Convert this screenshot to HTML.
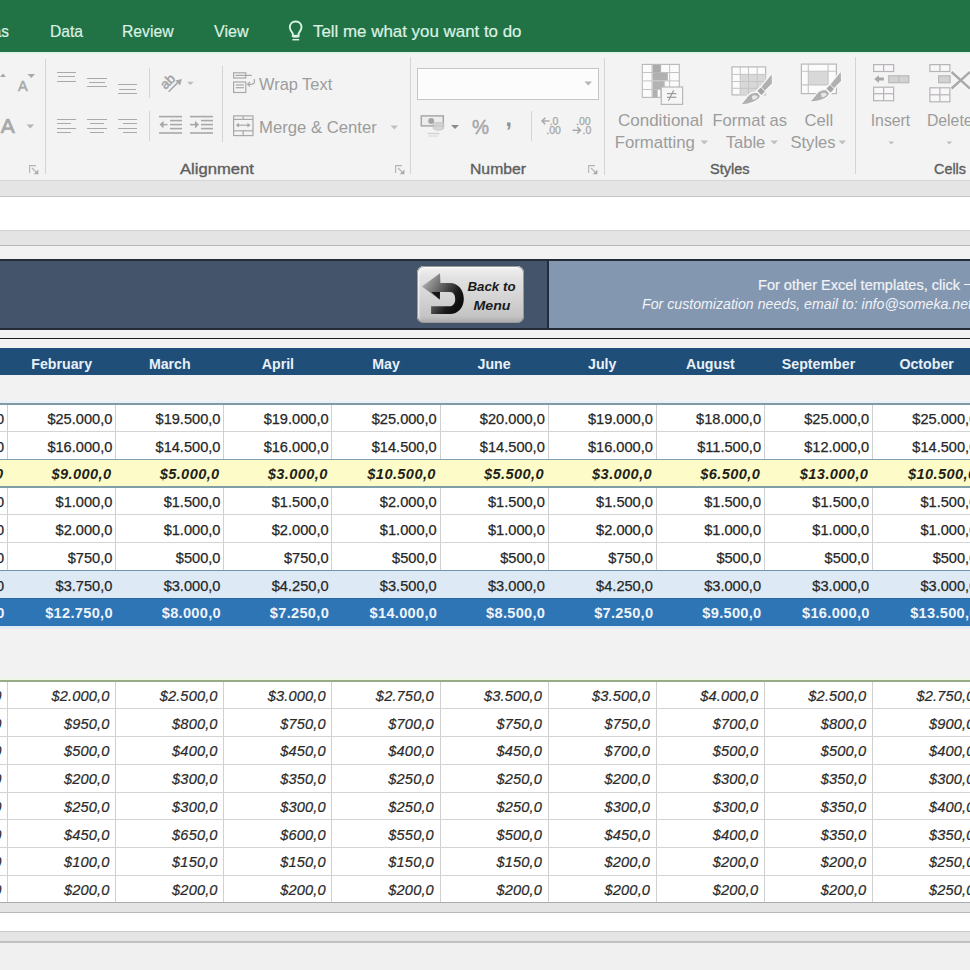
<!DOCTYPE html>
<html><head><meta charset="utf-8"><title>Excel</title>
<style>html,body{margin:0;padding:0;}body{width:970px;height:970px;overflow:hidden;position:relative;background:#f2f2f2;font-family:"Liberation Sans", sans-serif;}</style>
</head><body>
<div style="position:absolute;left:0px;top:0px;width:970px;height:52px;background:#217346;"></div><div style="position:absolute;left:-391.5px;width:400px;text-align:right;top:23.00px;font-size:17px;line-height:17px;color:#dcf1e4;font-weight:normal;font-style:normal;white-space:nowrap;transform:scaleX(0.9032);transform-origin:100% 0;-webkit-text-stroke:0.2px #dcf1e4;">Formulas</div><div style="position:absolute;left:49.5px;top:23.00px;font-size:17px;line-height:17px;color:#dcf1e4;font-weight:normal;font-style:normal;white-space:nowrap;transform:scaleX(0.9187);transform-origin:0 0;-webkit-text-stroke:0.2px #dcf1e4;">Data</div><div style="position:absolute;left:122.3px;top:23.00px;font-size:17px;line-height:17px;color:#dcf1e4;font-weight:normal;font-style:normal;white-space:nowrap;transform:scaleX(0.9238);transform-origin:0 0;-webkit-text-stroke:0.2px #dcf1e4;">Review</div><div style="position:absolute;left:213.9px;top:23.00px;font-size:17px;line-height:17px;color:#dcf1e4;font-weight:normal;font-style:normal;white-space:nowrap;transform:scaleX(0.9440);transform-origin:0 0;-webkit-text-stroke:0.2px #dcf1e4;">View</div><div style="position:absolute;left:312.7px;top:23.00px;font-size:17px;line-height:17px;color:#dcf1e4;font-weight:normal;font-style:normal;white-space:nowrap;transform:scaleX(0.9939);transform-origin:0 0;-webkit-text-stroke:0.2px #dcf1e4;">Tell me what you want to do</div><svg style="position:absolute;left:282px;top:16px" width="30" height="28" viewBox="0 0 30 28">
<path d="M13.7 5.5 C9.6 5.5 7.8 8.5 7.8 11.2 C7.8 13.8 9.6 15.6 10.8 17.5 L10.8 20 L16.6 20 L16.6 17.5 C17.8 15.6 19.5 13.8 19.5 11.2 C19.5 8.5 17.8 5.5 13.7 5.5 Z" fill="none" stroke="#d8f3e2" stroke-width="1.9"/>
<rect x="10.8" y="18.8" width="5.8" height="2.8" fill="#d8f3e2"/>
<line x1="10.4" y1="23.7" x2="17.2" y2="23.7" stroke="#d8f3e2" stroke-width="1.5"/>
</svg><div style="position:absolute;left:0px;top:52px;width:970px;height:128px;background:#f3f3f3;"></div><div style="position:absolute;left:0px;top:52px;width:970px;height:1.6px;background:#e2f3e8;"></div><div style="position:absolute;left:44.5px;top:59px;width:1px;height:115px;background:#d4d4d4;"></div><div style="position:absolute;left:410.1px;top:57px;width:1px;height:117px;background:#d4d4d4;"></div><div style="position:absolute;left:604.3px;top:57.5px;width:1px;height:117.5px;background:#d4d4d4;"></div><div style="position:absolute;left:854.9px;top:57px;width:1px;height:117px;background:#d4d4d4;"></div><div style="position:absolute;left:148.5px;top:68px;width:1px;height:30px;background:#d4d4d4;"></div><div style="position:absolute;left:148.5px;top:111px;width:1px;height:30px;background:#d4d4d4;"></div><div style="position:absolute;left:222px;top:66px;width:1px;height:76px;background:#d4d4d4;"></div><div style="position:absolute;left:180.3px;top:162.02px;font-size:14.6px;line-height:14.6px;color:#5e5e5e;font-weight:normal;font-style:normal;white-space:nowrap;transform:scaleX(1.1370);transform-origin:0 0;-webkit-text-stroke:0.35px #5e5e5e;">Alignment</div><div style="position:absolute;left:469.5px;top:162.02px;font-size:14.6px;line-height:14.6px;color:#5e5e5e;font-weight:normal;font-style:normal;white-space:nowrap;transform:scaleX(1.0789);transform-origin:0 0;-webkit-text-stroke:0.35px #5e5e5e;">Number</div><div style="position:absolute;left:710px;top:162.02px;font-size:14.6px;line-height:14.6px;color:#5e5e5e;font-weight:normal;font-style:normal;white-space:nowrap;transform:scaleX(0.9937);transform-origin:0 0;-webkit-text-stroke:0.35px #5e5e5e;">Styles</div><div style="position:absolute;left:933.8px;top:162.30px;font-size:14.6px;line-height:14.6px;color:#5e5e5e;font-weight:normal;font-style:normal;white-space:nowrap;transform:scaleX(0.9865);transform-origin:0 0;-webkit-text-stroke:0.35px #5e5e5e;">Cells</div><svg style="position:absolute;left:29px;top:165px" width="10" height="10" viewBox="0 0 10 10">
<path d="M0.6 8 V0.6 H7" fill="none" stroke="#b4b4b4" stroke-width="1.1"/>
<path d="M3 3 L7 7" stroke="#b4b4b4" stroke-width="1.1"/><path d="M9.4 4.5 V9.2 H4.7 Z" fill="#aaaaaa"/></svg><svg style="position:absolute;left:395px;top:165px" width="10" height="10" viewBox="0 0 10 10">
<path d="M0.6 8 V0.6 H7" fill="none" stroke="#b4b4b4" stroke-width="1.1"/>
<path d="M3 3 L7 7" stroke="#b4b4b4" stroke-width="1.1"/><path d="M9.4 4.5 V9.2 H4.7 Z" fill="#aaaaaa"/></svg><svg style="position:absolute;left:588px;top:165px" width="10" height="10" viewBox="0 0 10 10">
<path d="M0.6 8 V0.6 H7" fill="none" stroke="#b4b4b4" stroke-width="1.1"/>
<path d="M3 3 L7 7" stroke="#b4b4b4" stroke-width="1.1"/><path d="M9.4 4.5 V9.2 H4.7 Z" fill="#aaaaaa"/></svg><div style="position:absolute;left:18px;top:79.20px;font-size:14.5px;line-height:14.5px;color:#a8a8a8;font-weight:normal;font-style:normal;white-space:nowrap;-webkit-text-stroke:0.5px #a8a8a8;">A</div><svg style="position:absolute;left:0;top:72px" width="40" height="8"><path d="M0 5 L3 1.5 L6 5 Z" fill="#a8a8a8"/><path d="M27.5 2 L35 2 L31.25 6 Z" fill="#a8a8a8"/></svg><div style="position:absolute;left:0.7px;top:114.72px;font-size:21px;line-height:21px;color:#a8a8a8;font-weight:normal;font-style:normal;white-space:nowrap;-webkit-text-stroke:0.7px #a8a8a8;">A</div><svg style="position:absolute;left:26px;top:124px" width="9" height="6"><path d="M0.5 0.5 L8 0.5 L4.25 4.5 Z" fill="#b5b5b5"/></svg><div style="position:absolute;left:56.5px;top:71.65px;width:19.7px;height:1.7px;background:#a9a9a9"></div><div style="position:absolute;left:58.0px;top:75.65px;width:16.5px;height:1.7px;background:#a9a9a9"></div><div style="position:absolute;left:56.5px;top:80.65px;width:19.7px;height:1.7px;background:#a9a9a9"></div><div style="position:absolute;left:87.3px;top:77.65px;width:19.3px;height:1.7px;background:#a9a9a9"></div><div style="position:absolute;left:88.8px;top:81.65px;width:16.3px;height:1.7px;background:#a9a9a9"></div><div style="position:absolute;left:87.3px;top:85.65px;width:19.3px;height:1.7px;background:#a9a9a9"></div><div style="position:absolute;left:117.7px;top:83.65px;width:19.5px;height:1.7px;background:#a9a9a9"></div><div style="position:absolute;left:119.2px;top:88.65px;width:16.5px;height:1.7px;background:#a9a9a9"></div><div style="position:absolute;left:117.7px;top:92.65px;width:19.5px;height:1.7px;background:#a9a9a9"></div><div style="position:absolute;left:56.5px;top:118.65px;width:19.7px;height:1.7px;background:#a9a9a9"></div><div style="position:absolute;left:56.5px;top:122.65px;width:14px;height:1.7px;background:#a9a9a9"></div><div style="position:absolute;left:56.5px;top:127.65px;width:19.7px;height:1.7px;background:#a9a9a9"></div><div style="position:absolute;left:56.5px;top:131.65px;width:14px;height:1.7px;background:#a9a9a9"></div><div style="position:absolute;left:87.3px;top:118.65px;width:19.3px;height:1.7px;background:#a9a9a9"></div><div style="position:absolute;left:90.1px;top:122.65px;width:13.7px;height:1.7px;background:#a9a9a9"></div><div style="position:absolute;left:87.3px;top:127.65px;width:19.3px;height:1.7px;background:#a9a9a9"></div><div style="position:absolute;left:90.1px;top:131.65px;width:13.7px;height:1.7px;background:#a9a9a9"></div><div style="position:absolute;left:117.7px;top:118.65px;width:19.5px;height:1.7px;background:#a9a9a9"></div><div style="position:absolute;left:123.2px;top:122.65px;width:14.0px;height:1.7px;background:#a9a9a9"></div><div style="position:absolute;left:117.7px;top:127.65px;width:19.5px;height:1.7px;background:#a9a9a9"></div><div style="position:absolute;left:123.2px;top:131.65px;width:14.0px;height:1.7px;background:#a9a9a9"></div><svg style="position:absolute;left:150px;top:65px" width="50" height="35" viewBox="0 0 50 35">
<text x="0" y="4.9" text-anchor="middle" transform="translate(17.3,16.2) rotate(-45)" font-family="Liberation Sans" font-size="13.5" fill="#a2a2a2" stroke="#a2a2a2" stroke-width="0.45">ab</text>
<path d="M18.6 26.8 L29.5 15.9" stroke="#a8a8a8" stroke-width="1.5"/><path d="M31.8 14 L25.3 15.6 L30.2 20.5 Z" fill="#a8a8a8"/>
<path d="M37 16.8 L43.8 16.8 L40.4 20 Z" fill="#bdbdbd"/></svg><svg style="position:absolute;left:158px;top:115px" width="56" height="20" viewBox="0 0 56 20">
<g stroke="#a8a8a8" stroke-width="1.6">
<line x1="1" y1="1.6" x2="24" y2="1.6"/><line x1="12" y1="5.6" x2="24" y2="5.6"/><line x1="12" y1="9.6" x2="24" y2="9.6"/><line x1="12" y1="13.6" x2="24" y2="13.6"/><line x1="1" y1="18" x2="24" y2="18"/>
<line x1="3" y1="9.6" x2="9.5" y2="9.6"/>
<line x1="32" y1="1.6" x2="55" y2="1.6"/><line x1="43" y1="5.6" x2="55" y2="5.6"/><line x1="43" y1="9.6" x2="55" y2="9.6"/><line x1="43" y1="13.6" x2="55" y2="13.6"/><line x1="32" y1="18" x2="55" y2="18"/>
<line x1="32" y1="9.6" x2="38" y2="9.6"/>
</g>
<path d="M1.5 9.6 L5.5 5.8 L5.5 13.4 Z" fill="#a8a8a8"/><path d="M41 9.6 L37 5.8 L37 13.4 Z" fill="#a8a8a8"/>
</svg><svg style="position:absolute;left:228px;top:68px" width="30" height="28" viewBox="0 0 30 28">
<g fill="none" stroke="#a8a8a8" stroke-width="1.2">
<rect x="5.6" y="4.8" width="12.2" height="5.2"/><line x1="7.5" y1="7.4" x2="23.8" y2="7.4"/>
<rect x="5.6" y="14" width="12.2" height="10.5"/>
<line x1="7.8" y1="17" x2="16" y2="17"/><line x1="7.8" y1="19.7" x2="16" y2="19.7"/>
<path d="M26.4 11 L26.4 13.5 C26.4 15.5 25 16.3 23 16.3 L20 16.3"/>
<path d="M22 14 L19.6 16.3 L22 18.6"/>
</g></svg><div style="position:absolute;left:259px;top:76.01px;font-size:16.4px;line-height:16.4px;color:#9c9c9c;font-weight:normal;font-style:normal;white-space:nowrap;">Wrap Text</div><svg style="position:absolute;left:228px;top:110px" width="30" height="30" viewBox="0 0 30 30">
<g fill="none" stroke="#a8a8a8" stroke-width="1.2">
<rect x="5.6" y="5.9" width="19.4" height="19.7"/>
<line x1="5.6" y1="9.4" x2="25" y2="9.4"/><line x1="5.6" y1="20.8" x2="25" y2="20.8"/>
<line x1="15.2" y1="5.9" x2="15.2" y2="9.4"/><line x1="15.2" y1="20.8" x2="15.2" y2="25.6"/>
<line x1="9" y1="15.2" x2="21.5" y2="15.2"/>
</g>
<path d="M7.8 15.2 L11 12.8 L11 17.6 Z M22.6 15.2 L19.4 12.8 L19.4 17.6 Z" fill="#a8a8a8"/>
</svg><div style="position:absolute;left:259px;top:120.41px;font-size:16.7px;line-height:16.7px;color:#9c9c9c;font-weight:normal;font-style:normal;white-space:nowrap;">Merge &amp; Center</div><svg style="position:absolute;left:390px;top:125px" width="9" height="6"><path d="M0.5 0.5 L8 0.5 L4.25 4.5 Z" fill="#c0c0c0"/></svg><div style="position:absolute;left:417px;top:68px;width:180px;height:30px;background:#fcfcfc;border:1px solid #c6c6c6;"></div><svg style="position:absolute;left:584px;top:81px" width="9" height="6"><path d="M0.5 0.5 L8 0.5 L4.25 4.5 Z" fill="#b5b5b5"/></svg><svg style="position:absolute;left:415px;top:108px" width="50" height="32" viewBox="0 0 50 32">
<rect x="6.3" y="7.9" width="22" height="10" fill="#ededed" stroke="#a8a8a8" stroke-width="1.5"/>
<circle cx="16.2" cy="13" r="3" fill="#a5a5a5"/>
<ellipse cx="23.5" cy="16.5" rx="5.5" ry="2.2" fill="#d2d2d2" stroke="#c0c0c0" stroke-width="0.8"/>
<ellipse cx="23.5" cy="20" rx="5.5" ry="2.2" fill="#d6d6d6" stroke="#c4c4c4" stroke-width="0.8"/>
<line x1="12.5" y1="25.5" x2="24.5" y2="25.5" stroke="#d2d2d2" stroke-width="1.3"/><line x1="13.5" y1="28" x2="23" y2="28" stroke="#dadada" stroke-width="1.3"/>
<path d="M36 17 L44 17 L40 21 Z" fill="#8a8a8a"/>
</svg><div style="position:absolute;left:471.5px;top:117.81px;font-size:19.5px;line-height:19.5px;color:#a8a8a8;font-weight:normal;font-style:normal;white-space:nowrap;transform:scaleX(0.9802);transform-origin:0 0;-webkit-text-stroke:0.5px #a8a8a8;">%</div><div style="position:absolute;left:505.5px;top:106.51px;font-size:23px;line-height:23px;color:#909090;font-weight:bold;font-style:normal;white-space:nowrap;">,</div><div style="position:absolute;left:531px;top:111px;width:1px;height:29.5px;background:#d4d4d4;"></div><svg style="position:absolute;left:540px;top:116px" width="56" height="20" viewBox="0 0 56 20">
<g font-family="Liberation Sans" font-size="10.5" fill="#a5a5a5" stroke="#a5a5a5" stroke-width="0.25">
<text x="9.5" y="8.5">.0</text><text x="6.3" y="17.8">.00</text>
<text x="36" y="8.5">.00</text><text x="42.5" y="17.8">.0</text></g>
<g stroke="#a5a5a5" stroke-width="1.4" fill="none"><line x1="2" y1="5" x2="9.5" y2="5"/><path d="M5.3 1.8 L2 5 L5.3 8.2"/>
<line x1="32.5" y1="14.3" x2="40.5" y2="14.3"/><path d="M37.2 11.1 L40.5 14.3 L37.2 17.5"/></g>
</svg><svg style="position:absolute;left:635px;top:58px" width="50" height="50" viewBox="0 0 50 50">
<rect x="7.3" y="6.4" width="37" height="33" fill="#fbfbfb" stroke="#b8b8b8" stroke-width="1.1"/>
<g stroke="#c4c4c4" stroke-width="1"><line x1="7.3" y1="14.5" x2="44.3" y2="14.5"/><line x1="7.3" y1="22.9" x2="44.3" y2="22.9"/><line x1="7.3" y1="31.5" x2="44.3" y2="31.5"/>
<line x1="17" y1="6.4" x2="17" y2="39.4"/><line x1="25.7" y1="6.4" x2="25.7" y2="39.4"/><line x1="34.6" y1="6.4" x2="34.6" y2="39.4"/></g>
<rect x="17.6" y="6.9" width="8.1" height="7.6" fill="#ababab"/>
<rect x="17.6" y="14.8" width="15.2" height="7.6" fill="#b0b0b0"/>
<rect x="17.6" y="23.2" width="12.1" height="7.8" fill="#b3b3b3"/>
<rect x="17.6" y="31.8" width="5" height="7.6" fill="#b0b0b0"/>
<rect x="26.3" y="29" width="21.3" height="17.4" fill="#f6f6f6" stroke="#b8b8b8" stroke-width="1.2"/>
<g stroke="#9c9c9c" stroke-width="1.2"><line x1="32" y1="35.6" x2="41.4" y2="35.6"/><line x1="32" y1="39.3" x2="41.4" y2="39.3"/><line x1="38.7" y1="32.2" x2="33.4" y2="42.7"/></g>
</svg><svg style="position:absolute;left:725px;top:58px" width="50" height="50" viewBox="0 0 50 50">
<rect x="7" y="8.9" width="33.6" height="28" fill="#fbfbfb" stroke="#b8b8b8" stroke-width="1.2"/>
<rect x="15.2" y="16.4" width="25.4" height="20.5" fill="#d8d8d8"/>
<g stroke="#c4c4c4" stroke-width="1"><line x1="7" y1="16.4" x2="40.6" y2="16.4"/><line x1="7" y1="23.5" x2="40.6" y2="23.5"/><line x1="7" y1="30.3" x2="40.6" y2="30.3"/>
<line x1="15.2" y1="8.9" x2="15.2" y2="36.9"/><line x1="23.5" y1="8.9" x2="23.5" y2="36.9"/><line x1="32.2" y1="8.9" x2="32.2" y2="36.9"/></g>
<g transform="translate(0.9,2.6)"><g stroke="#f7f7f7" stroke-width="2.6" stroke-linejoin="round" fill="#f7f7f7">
<path d="M45.8 13.9 L46 23 L39 30 L35.5 26.5 Z"/><path d="M35 26.5 L39.5 31 L35.5 35 L31 30.5 Z"/>
<path d="M31.5 32.5 C27 31.5 22.5 34 20.5 38 L15.8 43.6 L22 42.8 C27 41.8 32.5 39.5 34 35.5 Z"/></g>
<path d="M45.8 13.9 L46 23 L39 30 L35.5 26.5 Z" fill="#b0b0b0"/>
<path d="M35 27 L39 31 L35.5 34.5 L31.5 30.5 Z" fill="#a6a6a6"/>
<path d="M31.5 32.5 C27 31.5 22.5 34 20.5 38 L15.8 43.6 L22 42.8 C27 41.8 32.5 39.5 34 35.5 Z" fill="#b0b0b0"/>
<path d="M26 35.5 C28 34 31 34.5 32 36.5 C30.5 38.5 28 39.5 26.5 39 Z" fill="#e8e8e8"/></g>
</svg><svg style="position:absolute;left:795px;top:58px" width="50" height="50" viewBox="0 0 50 50">
<rect x="6.4" y="6.1" width="35" height="29.5" fill="#fbfbfb" stroke="#b8b8b8" stroke-width="1.2"/>
<rect x="13.3" y="13.3" width="19.8" height="13.6" fill="#d8d8d8"/>
<g stroke="#c4c4c4" stroke-width="1.1"><line x1="6.4" y1="13.3" x2="41.4" y2="13.3"/><line x1="6.4" y1="26.9" x2="41.4" y2="26.9"/>
<line x1="13.3" y1="6.1" x2="13.3" y2="35.6"/><line x1="33.1" y1="6.1" x2="33.1" y2="35.6"/></g>
<g stroke="#f7f7f7" stroke-width="2.6" stroke-linejoin="round" fill="#f7f7f7">
<path d="M45.8 13.9 L46 23 L39 30 L35.5 26.5 Z"/><path d="M35 26.5 L39.5 31 L35.5 35 L31 30.5 Z"/>
<path d="M31.5 32.5 C27 31.5 22.5 34 20.5 38 L15.8 43.6 L22 42.8 C27 41.8 32.5 39.5 34 35.5 Z"/></g>
<path d="M45.8 13.9 L46 23 L39 30 L35.5 26.5 Z" fill="#b0b0b0"/>
<path d="M35 27 L39 31 L35.5 34.5 L31.5 30.5 Z" fill="#a6a6a6"/>
<path d="M31.5 32.5 C27 31.5 22.5 34 20.5 38 L15.8 43.6 L22 42.8 C27 41.8 32.5 39.5 34 35.5 Z" fill="#b0b0b0"/>
<path d="M26 35.5 C28 34 31 34.5 32 36.5 C30.5 38.5 28 39.5 26.5 39 Z" fill="#e8e8e8"/>
</svg><div style="position:absolute;left:360.5px;width:600px;text-align:center;top:112.00px;font-size:17.0px;line-height:17.0px;color:#9c9c9c;font-weight:normal;font-style:normal;white-space:nowrap;">Conditional</div><div style="position:absolute;left:354.79999999999995px;width:600px;text-align:center;top:134.51px;font-size:16.8px;line-height:16.8px;color:#9c9c9c;font-weight:normal;font-style:normal;white-space:nowrap;">Formatting</div><div style="position:absolute;left:449.79999999999995px;width:600px;text-align:center;top:113.01px;font-size:16.6px;line-height:16.6px;color:#9c9c9c;font-weight:normal;font-style:normal;white-space:nowrap;">Format as</div><div style="position:absolute;left:445.5px;width:600px;text-align:center;top:134.51px;font-size:16.6px;line-height:16.6px;color:#9c9c9c;font-weight:normal;font-style:normal;white-space:nowrap;">Table</div><div style="position:absolute;left:518.8px;width:600px;text-align:center;top:113.01px;font-size:16.6px;line-height:16.6px;color:#9c9c9c;font-weight:normal;font-style:normal;white-space:nowrap;">Cell</div><div style="position:absolute;left:513px;width:600px;text-align:center;top:134.51px;font-size:16.6px;line-height:16.6px;color:#9c9c9c;font-weight:normal;font-style:normal;white-space:nowrap;">Styles</div><svg style="position:absolute;left:699.5px;top:140px" width="9" height="6"><path d="M0.5 0.5 L8 0.5 L4.25 4.5 Z" fill="#c0c0c0"/></svg><svg style="position:absolute;left:770px;top:140px" width="9" height="6"><path d="M0.5 0.5 L8 0.5 L4.25 4.5 Z" fill="#c0c0c0"/></svg><svg style="position:absolute;left:838px;top:140px" width="9" height="6"><path d="M0.5 0.5 L8 0.5 L4.25 4.5 Z" fill="#c0c0c0"/></svg><svg style="position:absolute;left:865px;top:58px" width="50" height="50" viewBox="0 0 50 50">
<g fill="#f8f6f8" stroke="#b5b5b5" stroke-width="1.2">
<rect x="8.6" y="6.6" width="20" height="6.9"/><line x1="18.6" y1="6.6" x2="18.6" y2="13.5"/>
<rect x="8.6" y="29.2" width="20" height="13.5"/><line x1="18.6" y1="29.2" x2="18.6" y2="42.7"/><line x1="8.6" y1="35.7" x2="28.6" y2="35.7"/>
</g>
<rect x="23.8" y="17.8" width="20" height="6.9" fill="#d2d2d2" stroke="#b8b8b8" stroke-width="1.2"/><line x1="33.8" y1="17.8" x2="33.8" y2="24.7" stroke="#b8b8b8" stroke-width="1.1"/>
<path d="M9.2 21.1 L14 17.3 L14 19.6 L18.9 19.6 L18.9 22.6 L14 22.6 L14 24.9 Z" fill="#a8a8a8"/>
</svg><div style="position:absolute;left:590.5px;width:600px;text-align:center;top:113.20px;font-size:15.8px;line-height:15.8px;color:#9c9c9c;font-weight:normal;font-style:normal;white-space:nowrap;">Insert</div><svg style="position:absolute;left:925px;top:58px" width="45" height="50" viewBox="0 0 45 50">
<g fill="#f8f6f8" stroke="#b5b5b5" stroke-width="1.2">
<rect x="4.9" y="6.6" width="20" height="6.9"/><line x1="14.9" y1="6.6" x2="14.9" y2="13.5"/>
<rect x="4.9" y="29.8" width="20" height="14"/><line x1="14.9" y1="29.8" x2="14.9" y2="43.8"/><line x1="4.9" y1="36.8" x2="24.9" y2="36.8"/>
</g>
<rect x="13.6" y="17.8" width="11.5" height="6.9" fill="#d2d2d2" stroke="#b8b8b8" stroke-width="1.2"/>
<path d="M26.6 14 L45 30.5 M45 14 L26.6 30.5" stroke="#f6f6f6" stroke-width="4.5"/>
<path d="M26.6 14 L45 30.5 M45 14 L26.6 30.5" stroke="#a9a9a9" stroke-width="2.4"/>
</svg><div style="position:absolute;left:926.9px;top:113.20px;font-size:15.8px;line-height:15.8px;color:#9c9c9c;font-weight:normal;font-style:normal;white-space:nowrap;">Delete</div><svg style="position:absolute;left:887.5px;top:140.5px" width="9" height="6"><path d="M0.5 0.5 L6 0.5 L3.25 3.5 Z" fill="#bdbdbd"/></svg><svg style="position:absolute;left:945.5px;top:140.5px" width="9" height="6"><path d="M0.5 0.5 L6 0.5 L3.25 3.5 Z" fill="#bdbdbd"/></svg><div style="position:absolute;left:0px;top:180px;width:970px;height:1px;background:#d6d6d6;"></div><div style="position:absolute;left:0px;top:181px;width:970px;height:15px;background:#e5e5e5;"></div><div style="position:absolute;left:0px;top:195.5px;width:970px;height:1.2px;background:#c6c6c6;"></div><div style="position:absolute;left:0px;top:196.7px;width:970px;height:33.3px;background:#ffffff;"></div><div style="position:absolute;left:0px;top:230px;width:970px;height:1px;background:#d2d2d2;"></div><div style="position:absolute;left:0px;top:231px;width:970px;height:14.5px;background:#e4e4e4;"></div><div style="position:absolute;left:0px;top:245.3px;width:970px;height:1.2px;background:#b5b5b5;"></div><div style="position:absolute;left:0px;top:246.5px;width:970px;height:724px;background:#f2f2f2;"></div><div style="position:absolute;left:0px;top:259px;width:970px;height:71px;background:#252b38;"></div><div style="position:absolute;left:0px;top:261px;width:547px;height:67px;background:#44546a;"></div><div style="position:absolute;left:548.8px;top:261px;width:421.20000000000005px;height:67px;background:#8497b0;"></div><div style="position:absolute;left:416.5px;top:265.5px;width:107.5px;height:57px;border-radius:7px;
background:linear-gradient(180deg,#f4f4f4 0%,#e2e2e2 20%,#d2d2d2 60%,#c4c4c4 88%,#a9a9a9 100%);
box-shadow: inset 0 0 0 1px #9a9a9a, inset 2px 2px 2px rgba(255,255,255,0.8), 0 0 1px #555;"></div><svg style="position:absolute;left:412px;top:262px" width="60" height="64" viewBox="0 0 60 64">
<defs><linearGradient id="ag" x1="0.1" y1="0.2" x2="0.9" y2="0.7"><stop offset="0" stop-color="#a5a5a5"/><stop offset="0.45" stop-color="#5a5a5a"/><stop offset="0.8" stop-color="#1c1c1c"/><stop offset="1" stop-color="#0e0e0e"/></linearGradient></defs>
<path d="M28 11.2 L9.9 24.4 L27.7 37.6 L28 30 L38 30 C41.5 30 43.2 33 43.2 37.2 C43.2 41.5 41 44.2 37.5 44.2 L19.1 44.2 L19.1 52.1 L38 52.1 C46 52.1 51.8 45.5 51.8 37 C51.8 28 46 21.1 38 21.1 L28.4 21.1 Z" fill="url(#ag)"/>
<path d="M19.5 30 L28 30 L27.7 37.6 Z" fill="#141414"/>
</svg><div style="position:absolute;left:191.5px;width:600px;text-align:center;top:279.51px;font-size:13.3px;line-height:13.3px;color:#1a1a1a;font-weight:bold;font-style:italic;white-space:nowrap;">Back to</div><div style="position:absolute;left:192.3px;width:600px;text-align:center;top:298.70px;font-size:13.3px;line-height:13.3px;color:#1a1a1a;font-weight:bold;font-style:italic;white-space:nowrap;transform:scaleX(1.0657);transform-origin:50% 0;">Menu</div><div style="position:absolute;left:758px;top:277.81px;font-size:14px;line-height:14px;color:#f0f3f7;font-weight:normal;font-style:normal;white-space:nowrap;transform:scaleX(1.0385);transform-origin:0 0;-webkit-text-stroke:0.2px #f0f3f7;">For other Excel templates, click</div><div style="position:absolute;left:963.5px;top:284px;width:7px;height:1.4px;background:#f0f3f7;"></div><div style="position:absolute;left:642.3px;top:297.01px;font-size:14px;line-height:14px;color:#f0f3f7;font-weight:normal;font-style:italic;white-space:nowrap;transform:scaleX(1.0114);transform-origin:0 0;">For customization needs, email to: info@someka.net</div><div style="position:absolute;left:0px;top:338px;width:970px;height:1.3px;background:#1e1e1e;"></div><div style="position:absolute;left:0px;top:348px;width:970px;height:27px;background:#1f4e78;"></div><div style="position:absolute;left:-346.46000000000004px;width:600px;text-align:center;top:357.01px;font-size:14.2px;line-height:14.2px;color:#e8f0f8;font-weight:bold;font-style:normal;white-space:nowrap;">January</div><div style="position:absolute;left:-238.34px;width:600px;text-align:center;top:357.01px;font-size:14.2px;line-height:14.2px;color:#e8f0f8;font-weight:bold;font-style:normal;white-space:nowrap;">February</div><div style="position:absolute;left:-130.22px;width:600px;text-align:center;top:357.01px;font-size:14.2px;line-height:14.2px;color:#e8f0f8;font-weight:bold;font-style:normal;white-space:nowrap;">March</div><div style="position:absolute;left:-22.100000000000023px;width:600px;text-align:center;top:357.01px;font-size:14.2px;line-height:14.2px;color:#e8f0f8;font-weight:bold;font-style:normal;white-space:nowrap;">April</div><div style="position:absolute;left:86.02000000000004px;width:600px;text-align:center;top:357.01px;font-size:14.2px;line-height:14.2px;color:#e8f0f8;font-weight:bold;font-style:normal;white-space:nowrap;">May</div><div style="position:absolute;left:194.14000000000004px;width:600px;text-align:center;top:357.01px;font-size:14.2px;line-height:14.2px;color:#e8f0f8;font-weight:bold;font-style:normal;white-space:nowrap;">June</div><div style="position:absolute;left:302.26px;width:600px;text-align:center;top:357.01px;font-size:14.2px;line-height:14.2px;color:#e8f0f8;font-weight:bold;font-style:normal;white-space:nowrap;">July</div><div style="position:absolute;left:410.3800000000001px;width:600px;text-align:center;top:357.01px;font-size:14.2px;line-height:14.2px;color:#e8f0f8;font-weight:bold;font-style:normal;white-space:nowrap;">August</div><div style="position:absolute;left:518.5px;width:600px;text-align:center;top:357.01px;font-size:14.2px;line-height:14.2px;color:#e8f0f8;font-weight:bold;font-style:normal;white-space:nowrap;">September</div><div style="position:absolute;left:626.6200000000001px;width:600px;text-align:center;top:357.01px;font-size:14.2px;line-height:14.2px;color:#e8f0f8;font-weight:bold;font-style:normal;white-space:nowrap;">October</div><div style="position:absolute;left:0px;top:404.0px;width:970px;height:27.75px;background:#ffffff;"></div><div style="position:absolute;left:0px;top:431.75px;width:970px;height:27.75px;background:#ffffff;"></div><div style="position:absolute;left:0px;top:459.5px;width:970px;height:27.75px;background:#fdfcc9;"></div><div style="position:absolute;left:0px;top:487.25px;width:970px;height:27.75px;background:#ffffff;"></div><div style="position:absolute;left:0px;top:515.0px;width:970px;height:27.75px;background:#ffffff;"></div><div style="position:absolute;left:0px;top:542.75px;width:970px;height:27.75px;background:#ffffff;"></div><div style="position:absolute;left:0px;top:570.5px;width:970px;height:27.75px;background:#ddeaf6;"></div><div style="position:absolute;left:0px;top:598.25px;width:970px;height:27.75px;background:#2e75b6;"></div><div style="position:absolute;left:7px;top:404.0px;width:1px;height:27.75px;background:#d0d0d0;"></div><div style="position:absolute;left:115px;top:404.0px;width:1px;height:27.75px;background:#d0d0d0;"></div><div style="position:absolute;left:223px;top:404.0px;width:1px;height:27.75px;background:#d0d0d0;"></div><div style="position:absolute;left:331px;top:404.0px;width:1px;height:27.75px;background:#d0d0d0;"></div><div style="position:absolute;left:440px;top:404.0px;width:1px;height:27.75px;background:#d0d0d0;"></div><div style="position:absolute;left:548px;top:404.0px;width:1px;height:27.75px;background:#d0d0d0;"></div><div style="position:absolute;left:656px;top:404.0px;width:1px;height:27.75px;background:#d0d0d0;"></div><div style="position:absolute;left:764px;top:404.0px;width:1px;height:27.75px;background:#d0d0d0;"></div><div style="position:absolute;left:872px;top:404.0px;width:1px;height:27.75px;background:#d0d0d0;"></div><div style="position:absolute;left:980px;top:404.0px;width:1px;height:27.75px;background:#d0d0d0;"></div><div style="position:absolute;left:7px;top:431.75px;width:1px;height:27.75px;background:#d0d0d0;"></div><div style="position:absolute;left:115px;top:431.75px;width:1px;height:27.75px;background:#d0d0d0;"></div><div style="position:absolute;left:223px;top:431.75px;width:1px;height:27.75px;background:#d0d0d0;"></div><div style="position:absolute;left:331px;top:431.75px;width:1px;height:27.75px;background:#d0d0d0;"></div><div style="position:absolute;left:440px;top:431.75px;width:1px;height:27.75px;background:#d0d0d0;"></div><div style="position:absolute;left:548px;top:431.75px;width:1px;height:27.75px;background:#d0d0d0;"></div><div style="position:absolute;left:656px;top:431.75px;width:1px;height:27.75px;background:#d0d0d0;"></div><div style="position:absolute;left:764px;top:431.75px;width:1px;height:27.75px;background:#d0d0d0;"></div><div style="position:absolute;left:872px;top:431.75px;width:1px;height:27.75px;background:#d0d0d0;"></div><div style="position:absolute;left:980px;top:431.75px;width:1px;height:27.75px;background:#d0d0d0;"></div><div style="position:absolute;left:7px;top:487.25px;width:1px;height:27.75px;background:#d0d0d0;"></div><div style="position:absolute;left:115px;top:487.25px;width:1px;height:27.75px;background:#d0d0d0;"></div><div style="position:absolute;left:223px;top:487.25px;width:1px;height:27.75px;background:#d0d0d0;"></div><div style="position:absolute;left:331px;top:487.25px;width:1px;height:27.75px;background:#d0d0d0;"></div><div style="position:absolute;left:440px;top:487.25px;width:1px;height:27.75px;background:#d0d0d0;"></div><div style="position:absolute;left:548px;top:487.25px;width:1px;height:27.75px;background:#d0d0d0;"></div><div style="position:absolute;left:656px;top:487.25px;width:1px;height:27.75px;background:#d0d0d0;"></div><div style="position:absolute;left:764px;top:487.25px;width:1px;height:27.75px;background:#d0d0d0;"></div><div style="position:absolute;left:872px;top:487.25px;width:1px;height:27.75px;background:#d0d0d0;"></div><div style="position:absolute;left:980px;top:487.25px;width:1px;height:27.75px;background:#d0d0d0;"></div><div style="position:absolute;left:7px;top:515.0px;width:1px;height:27.75px;background:#d0d0d0;"></div><div style="position:absolute;left:115px;top:515.0px;width:1px;height:27.75px;background:#d0d0d0;"></div><div style="position:absolute;left:223px;top:515.0px;width:1px;height:27.75px;background:#d0d0d0;"></div><div style="position:absolute;left:331px;top:515.0px;width:1px;height:27.75px;background:#d0d0d0;"></div><div style="position:absolute;left:440px;top:515.0px;width:1px;height:27.75px;background:#d0d0d0;"></div><div style="position:absolute;left:548px;top:515.0px;width:1px;height:27.75px;background:#d0d0d0;"></div><div style="position:absolute;left:656px;top:515.0px;width:1px;height:27.75px;background:#d0d0d0;"></div><div style="position:absolute;left:764px;top:515.0px;width:1px;height:27.75px;background:#d0d0d0;"></div><div style="position:absolute;left:872px;top:515.0px;width:1px;height:27.75px;background:#d0d0d0;"></div><div style="position:absolute;left:980px;top:515.0px;width:1px;height:27.75px;background:#d0d0d0;"></div><div style="position:absolute;left:7px;top:542.75px;width:1px;height:27.75px;background:#d0d0d0;"></div><div style="position:absolute;left:115px;top:542.75px;width:1px;height:27.75px;background:#d0d0d0;"></div><div style="position:absolute;left:223px;top:542.75px;width:1px;height:27.75px;background:#d0d0d0;"></div><div style="position:absolute;left:331px;top:542.75px;width:1px;height:27.75px;background:#d0d0d0;"></div><div style="position:absolute;left:440px;top:542.75px;width:1px;height:27.75px;background:#d0d0d0;"></div><div style="position:absolute;left:548px;top:542.75px;width:1px;height:27.75px;background:#d0d0d0;"></div><div style="position:absolute;left:656px;top:542.75px;width:1px;height:27.75px;background:#d0d0d0;"></div><div style="position:absolute;left:764px;top:542.75px;width:1px;height:27.75px;background:#d0d0d0;"></div><div style="position:absolute;left:872px;top:542.75px;width:1px;height:27.75px;background:#d0d0d0;"></div><div style="position:absolute;left:980px;top:542.75px;width:1px;height:27.75px;background:#d0d0d0;"></div><div style="position:absolute;left:0px;top:431px;width:970px;height:1px;background:#d4d4d4;"></div><div style="position:absolute;left:0px;top:458.7px;width:970px;height:1.6px;background:#819fa6;"></div><div style="position:absolute;left:0px;top:486.45px;width:970px;height:1.6px;background:#819fa6;"></div><div style="position:absolute;left:0px;top:514px;width:970px;height:1px;background:#d4d4d4;"></div><div style="position:absolute;left:0px;top:542px;width:970px;height:1px;background:#d4d4d4;"></div><div style="position:absolute;left:0px;top:569.7px;width:970px;height:1.6px;background:#7393ab;"></div><div style="position:absolute;left:0px;top:597.65px;width:970px;height:1.2px;background:#2a66a0;"></div><div style="position:absolute;left:0px;top:400.5px;width:970px;height:2.7px;background:#e8f1f6;"></div><div style="position:absolute;left:0px;top:403.2px;width:970px;height:1.6px;background:#819aa8;"></div><div style="position:absolute;left:-395.8px;width:400px;text-align:right;top:412.07px;font-size:14.6px;line-height:14.6px;color:#262626;font-weight:normal;font-style:normal;white-space:nowrap;-webkit-text-stroke:0.25px #262626;">$25.000,0</div><div style="position:absolute;left:-287.68px;width:400px;text-align:right;top:412.07px;font-size:14.6px;line-height:14.6px;color:#262626;font-weight:normal;font-style:normal;white-space:nowrap;-webkit-text-stroke:0.25px #262626;">$25.000,0</div><div style="position:absolute;left:-179.56px;width:400px;text-align:right;top:412.07px;font-size:14.6px;line-height:14.6px;color:#262626;font-weight:normal;font-style:normal;white-space:nowrap;-webkit-text-stroke:0.25px #262626;">$19.500,0</div><div style="position:absolute;left:-71.43999999999994px;width:400px;text-align:right;top:412.07px;font-size:14.6px;line-height:14.6px;color:#262626;font-weight:normal;font-style:normal;white-space:nowrap;-webkit-text-stroke:0.25px #262626;">$19.000,0</div><div style="position:absolute;left:36.680000000000064px;width:400px;text-align:right;top:412.07px;font-size:14.6px;line-height:14.6px;color:#262626;font-weight:normal;font-style:normal;white-space:nowrap;-webkit-text-stroke:0.25px #262626;">$25.000,0</div><div style="position:absolute;left:144.80000000000007px;width:400px;text-align:right;top:412.07px;font-size:14.6px;line-height:14.6px;color:#262626;font-weight:normal;font-style:normal;white-space:nowrap;-webkit-text-stroke:0.25px #262626;">$20.000,0</div><div style="position:absolute;left:252.92000000000007px;width:400px;text-align:right;top:412.07px;font-size:14.6px;line-height:14.6px;color:#262626;font-weight:normal;font-style:normal;white-space:nowrap;-webkit-text-stroke:0.25px #262626;">$19.000,0</div><div style="position:absolute;left:361.0400000000001px;width:400px;text-align:right;top:412.07px;font-size:14.6px;line-height:14.6px;color:#262626;font-weight:normal;font-style:normal;white-space:nowrap;-webkit-text-stroke:0.25px #262626;">$18.000,0</div><div style="position:absolute;left:469.1600000000001px;width:400px;text-align:right;top:412.07px;font-size:14.6px;line-height:14.6px;color:#262626;font-weight:normal;font-style:normal;white-space:nowrap;-webkit-text-stroke:0.25px #262626;">$25.000,0</div><div style="position:absolute;left:577.2800000000001px;width:400px;text-align:right;top:412.07px;font-size:14.6px;line-height:14.6px;color:#262626;font-weight:normal;font-style:normal;white-space:nowrap;-webkit-text-stroke:0.25px #262626;">$25.000,0</div><div style="position:absolute;left:-395.8px;width:400px;text-align:right;top:439.82px;font-size:14.6px;line-height:14.6px;color:#262626;font-weight:normal;font-style:normal;white-space:nowrap;-webkit-text-stroke:0.25px #262626;">$16.000,0</div><div style="position:absolute;left:-287.68px;width:400px;text-align:right;top:439.82px;font-size:14.6px;line-height:14.6px;color:#262626;font-weight:normal;font-style:normal;white-space:nowrap;-webkit-text-stroke:0.25px #262626;">$16.000,0</div><div style="position:absolute;left:-179.56px;width:400px;text-align:right;top:439.82px;font-size:14.6px;line-height:14.6px;color:#262626;font-weight:normal;font-style:normal;white-space:nowrap;-webkit-text-stroke:0.25px #262626;">$14.500,0</div><div style="position:absolute;left:-71.43999999999994px;width:400px;text-align:right;top:439.82px;font-size:14.6px;line-height:14.6px;color:#262626;font-weight:normal;font-style:normal;white-space:nowrap;-webkit-text-stroke:0.25px #262626;">$16.000,0</div><div style="position:absolute;left:36.680000000000064px;width:400px;text-align:right;top:439.82px;font-size:14.6px;line-height:14.6px;color:#262626;font-weight:normal;font-style:normal;white-space:nowrap;-webkit-text-stroke:0.25px #262626;">$14.500,0</div><div style="position:absolute;left:144.80000000000007px;width:400px;text-align:right;top:439.82px;font-size:14.6px;line-height:14.6px;color:#262626;font-weight:normal;font-style:normal;white-space:nowrap;-webkit-text-stroke:0.25px #262626;">$14.500,0</div><div style="position:absolute;left:252.92000000000007px;width:400px;text-align:right;top:439.82px;font-size:14.6px;line-height:14.6px;color:#262626;font-weight:normal;font-style:normal;white-space:nowrap;-webkit-text-stroke:0.25px #262626;">$16.000,0</div><div style="position:absolute;left:361.0400000000001px;width:400px;text-align:right;top:439.82px;font-size:14.6px;line-height:14.6px;color:#262626;font-weight:normal;font-style:normal;white-space:nowrap;-webkit-text-stroke:0.25px #262626;">$11.500,0</div><div style="position:absolute;left:469.1600000000001px;width:400px;text-align:right;top:439.82px;font-size:14.6px;line-height:14.6px;color:#262626;font-weight:normal;font-style:normal;white-space:nowrap;-webkit-text-stroke:0.25px #262626;">$12.000,0</div><div style="position:absolute;left:577.2800000000001px;width:400px;text-align:right;top:439.82px;font-size:14.6px;line-height:14.6px;color:#262626;font-weight:normal;font-style:normal;white-space:nowrap;-webkit-text-stroke:0.25px #262626;">$14.500,0</div><div style="position:absolute;left:-396.6px;width:400px;text-align:right;top:466.98px;font-size:14.6px;line-height:14.6px;color:#1f1f1a;font-weight:bold;font-style:italic;white-space:nowrap;letter-spacing:0.4px;">$9.000,0</div><div style="position:absolute;left:-288.48px;width:400px;text-align:right;top:466.98px;font-size:14.6px;line-height:14.6px;color:#1f1f1a;font-weight:bold;font-style:italic;white-space:nowrap;letter-spacing:0.4px;">$9.000,0</div><div style="position:absolute;left:-180.36px;width:400px;text-align:right;top:466.98px;font-size:14.6px;line-height:14.6px;color:#1f1f1a;font-weight:bold;font-style:italic;white-space:nowrap;letter-spacing:0.4px;">$5.000,0</div><div style="position:absolute;left:-72.23999999999995px;width:400px;text-align:right;top:466.98px;font-size:14.6px;line-height:14.6px;color:#1f1f1a;font-weight:bold;font-style:italic;white-space:nowrap;letter-spacing:0.4px;">$3.000,0</div><div style="position:absolute;left:35.88000000000005px;width:400px;text-align:right;top:466.98px;font-size:14.6px;line-height:14.6px;color:#1f1f1a;font-weight:bold;font-style:italic;white-space:nowrap;letter-spacing:0.4px;">$10.500,0</div><div style="position:absolute;left:144.0000000000001px;width:400px;text-align:right;top:466.98px;font-size:14.6px;line-height:14.6px;color:#1f1f1a;font-weight:bold;font-style:italic;white-space:nowrap;letter-spacing:0.4px;">$5.500,0</div><div style="position:absolute;left:252.12000000000012px;width:400px;text-align:right;top:466.98px;font-size:14.6px;line-height:14.6px;color:#1f1f1a;font-weight:bold;font-style:italic;white-space:nowrap;letter-spacing:0.4px;">$3.000,0</div><div style="position:absolute;left:360.2400000000001px;width:400px;text-align:right;top:466.98px;font-size:14.6px;line-height:14.6px;color:#1f1f1a;font-weight:bold;font-style:italic;white-space:nowrap;letter-spacing:0.4px;">$6.500,0</div><div style="position:absolute;left:468.3600000000001px;width:400px;text-align:right;top:466.98px;font-size:14.6px;line-height:14.6px;color:#1f1f1a;font-weight:bold;font-style:italic;white-space:nowrap;letter-spacing:0.4px;">$13.000,0</div><div style="position:absolute;left:576.4800000000001px;width:400px;text-align:right;top:466.98px;font-size:14.6px;line-height:14.6px;color:#1f1f1a;font-weight:bold;font-style:italic;white-space:nowrap;letter-spacing:0.4px;">$10.500,0</div><div style="position:absolute;left:-395.8px;width:400px;text-align:right;top:495.32px;font-size:14.6px;line-height:14.6px;color:#262626;font-weight:normal;font-style:normal;white-space:nowrap;-webkit-text-stroke:0.25px #262626;">$1.000,0</div><div style="position:absolute;left:-287.68px;width:400px;text-align:right;top:495.32px;font-size:14.6px;line-height:14.6px;color:#262626;font-weight:normal;font-style:normal;white-space:nowrap;-webkit-text-stroke:0.25px #262626;">$1.000,0</div><div style="position:absolute;left:-179.56px;width:400px;text-align:right;top:495.32px;font-size:14.6px;line-height:14.6px;color:#262626;font-weight:normal;font-style:normal;white-space:nowrap;-webkit-text-stroke:0.25px #262626;">$1.500,0</div><div style="position:absolute;left:-71.43999999999994px;width:400px;text-align:right;top:495.32px;font-size:14.6px;line-height:14.6px;color:#262626;font-weight:normal;font-style:normal;white-space:nowrap;-webkit-text-stroke:0.25px #262626;">$1.500,0</div><div style="position:absolute;left:36.680000000000064px;width:400px;text-align:right;top:495.32px;font-size:14.6px;line-height:14.6px;color:#262626;font-weight:normal;font-style:normal;white-space:nowrap;-webkit-text-stroke:0.25px #262626;">$2.000,0</div><div style="position:absolute;left:144.80000000000007px;width:400px;text-align:right;top:495.32px;font-size:14.6px;line-height:14.6px;color:#262626;font-weight:normal;font-style:normal;white-space:nowrap;-webkit-text-stroke:0.25px #262626;">$1.500,0</div><div style="position:absolute;left:252.92000000000007px;width:400px;text-align:right;top:495.32px;font-size:14.6px;line-height:14.6px;color:#262626;font-weight:normal;font-style:normal;white-space:nowrap;-webkit-text-stroke:0.25px #262626;">$1.500,0</div><div style="position:absolute;left:361.0400000000001px;width:400px;text-align:right;top:495.32px;font-size:14.6px;line-height:14.6px;color:#262626;font-weight:normal;font-style:normal;white-space:nowrap;-webkit-text-stroke:0.25px #262626;">$1.500,0</div><div style="position:absolute;left:469.1600000000001px;width:400px;text-align:right;top:495.32px;font-size:14.6px;line-height:14.6px;color:#262626;font-weight:normal;font-style:normal;white-space:nowrap;-webkit-text-stroke:0.25px #262626;">$1.500,0</div><div style="position:absolute;left:577.2800000000001px;width:400px;text-align:right;top:495.32px;font-size:14.6px;line-height:14.6px;color:#262626;font-weight:normal;font-style:normal;white-space:nowrap;-webkit-text-stroke:0.25px #262626;">$1.500,0</div><div style="position:absolute;left:-395.8px;width:400px;text-align:right;top:523.07px;font-size:14.6px;line-height:14.6px;color:#262626;font-weight:normal;font-style:normal;white-space:nowrap;-webkit-text-stroke:0.25px #262626;">$2.000,0</div><div style="position:absolute;left:-287.68px;width:400px;text-align:right;top:523.07px;font-size:14.6px;line-height:14.6px;color:#262626;font-weight:normal;font-style:normal;white-space:nowrap;-webkit-text-stroke:0.25px #262626;">$2.000,0</div><div style="position:absolute;left:-179.56px;width:400px;text-align:right;top:523.07px;font-size:14.6px;line-height:14.6px;color:#262626;font-weight:normal;font-style:normal;white-space:nowrap;-webkit-text-stroke:0.25px #262626;">$1.000,0</div><div style="position:absolute;left:-71.43999999999994px;width:400px;text-align:right;top:523.07px;font-size:14.6px;line-height:14.6px;color:#262626;font-weight:normal;font-style:normal;white-space:nowrap;-webkit-text-stroke:0.25px #262626;">$2.000,0</div><div style="position:absolute;left:36.680000000000064px;width:400px;text-align:right;top:523.07px;font-size:14.6px;line-height:14.6px;color:#262626;font-weight:normal;font-style:normal;white-space:nowrap;-webkit-text-stroke:0.25px #262626;">$1.000,0</div><div style="position:absolute;left:144.80000000000007px;width:400px;text-align:right;top:523.07px;font-size:14.6px;line-height:14.6px;color:#262626;font-weight:normal;font-style:normal;white-space:nowrap;-webkit-text-stroke:0.25px #262626;">$1.000,0</div><div style="position:absolute;left:252.92000000000007px;width:400px;text-align:right;top:523.07px;font-size:14.6px;line-height:14.6px;color:#262626;font-weight:normal;font-style:normal;white-space:nowrap;-webkit-text-stroke:0.25px #262626;">$2.000,0</div><div style="position:absolute;left:361.0400000000001px;width:400px;text-align:right;top:523.07px;font-size:14.6px;line-height:14.6px;color:#262626;font-weight:normal;font-style:normal;white-space:nowrap;-webkit-text-stroke:0.25px #262626;">$1.000,0</div><div style="position:absolute;left:469.1600000000001px;width:400px;text-align:right;top:523.07px;font-size:14.6px;line-height:14.6px;color:#262626;font-weight:normal;font-style:normal;white-space:nowrap;-webkit-text-stroke:0.25px #262626;">$1.000,0</div><div style="position:absolute;left:577.2800000000001px;width:400px;text-align:right;top:523.07px;font-size:14.6px;line-height:14.6px;color:#262626;font-weight:normal;font-style:normal;white-space:nowrap;-webkit-text-stroke:0.25px #262626;">$1.000,0</div><div style="position:absolute;left:-395.8px;width:400px;text-align:right;top:550.82px;font-size:14.6px;line-height:14.6px;color:#262626;font-weight:normal;font-style:normal;white-space:nowrap;-webkit-text-stroke:0.25px #262626;">$750,0</div><div style="position:absolute;left:-287.68px;width:400px;text-align:right;top:550.82px;font-size:14.6px;line-height:14.6px;color:#262626;font-weight:normal;font-style:normal;white-space:nowrap;-webkit-text-stroke:0.25px #262626;">$750,0</div><div style="position:absolute;left:-179.56px;width:400px;text-align:right;top:550.82px;font-size:14.6px;line-height:14.6px;color:#262626;font-weight:normal;font-style:normal;white-space:nowrap;-webkit-text-stroke:0.25px #262626;">$500,0</div><div style="position:absolute;left:-71.43999999999994px;width:400px;text-align:right;top:550.82px;font-size:14.6px;line-height:14.6px;color:#262626;font-weight:normal;font-style:normal;white-space:nowrap;-webkit-text-stroke:0.25px #262626;">$750,0</div><div style="position:absolute;left:36.680000000000064px;width:400px;text-align:right;top:550.82px;font-size:14.6px;line-height:14.6px;color:#262626;font-weight:normal;font-style:normal;white-space:nowrap;-webkit-text-stroke:0.25px #262626;">$500,0</div><div style="position:absolute;left:144.80000000000007px;width:400px;text-align:right;top:550.82px;font-size:14.6px;line-height:14.6px;color:#262626;font-weight:normal;font-style:normal;white-space:nowrap;-webkit-text-stroke:0.25px #262626;">$500,0</div><div style="position:absolute;left:252.92000000000007px;width:400px;text-align:right;top:550.82px;font-size:14.6px;line-height:14.6px;color:#262626;font-weight:normal;font-style:normal;white-space:nowrap;-webkit-text-stroke:0.25px #262626;">$750,0</div><div style="position:absolute;left:361.0400000000001px;width:400px;text-align:right;top:550.82px;font-size:14.6px;line-height:14.6px;color:#262626;font-weight:normal;font-style:normal;white-space:nowrap;-webkit-text-stroke:0.25px #262626;">$500,0</div><div style="position:absolute;left:469.1600000000001px;width:400px;text-align:right;top:550.82px;font-size:14.6px;line-height:14.6px;color:#262626;font-weight:normal;font-style:normal;white-space:nowrap;-webkit-text-stroke:0.25px #262626;">$500,0</div><div style="position:absolute;left:577.2800000000001px;width:400px;text-align:right;top:550.82px;font-size:14.6px;line-height:14.6px;color:#262626;font-weight:normal;font-style:normal;white-space:nowrap;-webkit-text-stroke:0.25px #262626;">$500,0</div><div style="position:absolute;left:-395.8px;width:400px;text-align:right;top:578.57px;font-size:14.6px;line-height:14.6px;color:#262626;font-weight:normal;font-style:normal;white-space:nowrap;-webkit-text-stroke:0.25px #262626;">$3.750,0</div><div style="position:absolute;left:-287.68px;width:400px;text-align:right;top:578.57px;font-size:14.6px;line-height:14.6px;color:#262626;font-weight:normal;font-style:normal;white-space:nowrap;-webkit-text-stroke:0.25px #262626;">$3.750,0</div><div style="position:absolute;left:-179.56px;width:400px;text-align:right;top:578.57px;font-size:14.6px;line-height:14.6px;color:#262626;font-weight:normal;font-style:normal;white-space:nowrap;-webkit-text-stroke:0.25px #262626;">$3.000,0</div><div style="position:absolute;left:-71.43999999999994px;width:400px;text-align:right;top:578.57px;font-size:14.6px;line-height:14.6px;color:#262626;font-weight:normal;font-style:normal;white-space:nowrap;-webkit-text-stroke:0.25px #262626;">$4.250,0</div><div style="position:absolute;left:36.680000000000064px;width:400px;text-align:right;top:578.57px;font-size:14.6px;line-height:14.6px;color:#262626;font-weight:normal;font-style:normal;white-space:nowrap;-webkit-text-stroke:0.25px #262626;">$3.500,0</div><div style="position:absolute;left:144.80000000000007px;width:400px;text-align:right;top:578.57px;font-size:14.6px;line-height:14.6px;color:#262626;font-weight:normal;font-style:normal;white-space:nowrap;-webkit-text-stroke:0.25px #262626;">$3.000,0</div><div style="position:absolute;left:252.92000000000007px;width:400px;text-align:right;top:578.57px;font-size:14.6px;line-height:14.6px;color:#262626;font-weight:normal;font-style:normal;white-space:nowrap;-webkit-text-stroke:0.25px #262626;">$4.250,0</div><div style="position:absolute;left:361.0400000000001px;width:400px;text-align:right;top:578.57px;font-size:14.6px;line-height:14.6px;color:#262626;font-weight:normal;font-style:normal;white-space:nowrap;-webkit-text-stroke:0.25px #262626;">$3.000,0</div><div style="position:absolute;left:469.1600000000001px;width:400px;text-align:right;top:578.57px;font-size:14.6px;line-height:14.6px;color:#262626;font-weight:normal;font-style:normal;white-space:nowrap;-webkit-text-stroke:0.25px #262626;">$3.000,0</div><div style="position:absolute;left:577.2800000000001px;width:400px;text-align:right;top:578.57px;font-size:14.6px;line-height:14.6px;color:#262626;font-weight:normal;font-style:normal;white-space:nowrap;-webkit-text-stroke:0.25px #262626;">$3.000,0</div><div style="position:absolute;left:-395.3px;width:400px;text-align:right;top:606.13px;font-size:14.6px;line-height:14.6px;color:#eef4fa;font-weight:bold;font-style:normal;white-space:nowrap;letter-spacing:0.3px;">$12.750,0</div><div style="position:absolute;left:-287.18px;width:400px;text-align:right;top:606.13px;font-size:14.6px;line-height:14.6px;color:#eef4fa;font-weight:bold;font-style:normal;white-space:nowrap;letter-spacing:0.3px;">$12.750,0</div><div style="position:absolute;left:-179.06px;width:400px;text-align:right;top:606.13px;font-size:14.6px;line-height:14.6px;color:#eef4fa;font-weight:bold;font-style:normal;white-space:nowrap;letter-spacing:0.3px;">$8.000,0</div><div style="position:absolute;left:-70.93999999999994px;width:400px;text-align:right;top:606.13px;font-size:14.6px;line-height:14.6px;color:#eef4fa;font-weight:bold;font-style:normal;white-space:nowrap;letter-spacing:0.3px;">$7.250,0</div><div style="position:absolute;left:37.180000000000064px;width:400px;text-align:right;top:606.13px;font-size:14.6px;line-height:14.6px;color:#eef4fa;font-weight:bold;font-style:normal;white-space:nowrap;letter-spacing:0.3px;">$14.000,0</div><div style="position:absolute;left:145.30000000000007px;width:400px;text-align:right;top:606.13px;font-size:14.6px;line-height:14.6px;color:#eef4fa;font-weight:bold;font-style:normal;white-space:nowrap;letter-spacing:0.3px;">$8.500,0</div><div style="position:absolute;left:253.42000000000007px;width:400px;text-align:right;top:606.13px;font-size:14.6px;line-height:14.6px;color:#eef4fa;font-weight:bold;font-style:normal;white-space:nowrap;letter-spacing:0.3px;">$7.250,0</div><div style="position:absolute;left:361.5400000000001px;width:400px;text-align:right;top:606.13px;font-size:14.6px;line-height:14.6px;color:#eef4fa;font-weight:bold;font-style:normal;white-space:nowrap;letter-spacing:0.3px;">$9.500,0</div><div style="position:absolute;left:469.6600000000001px;width:400px;text-align:right;top:606.13px;font-size:14.6px;line-height:14.6px;color:#eef4fa;font-weight:bold;font-style:normal;white-space:nowrap;letter-spacing:0.3px;">$16.000,0</div><div style="position:absolute;left:577.7800000000001px;width:400px;text-align:right;top:606.13px;font-size:14.6px;line-height:14.6px;color:#eef4fa;font-weight:bold;font-style:normal;white-space:nowrap;letter-spacing:0.3px;">$13.500,0</div><div style="position:absolute;left:0px;top:681.0px;width:970px;height:27.75px;background:#ffffff;"></div><div style="position:absolute;left:0px;top:708.75px;width:970px;height:27.75px;background:#ffffff;"></div><div style="position:absolute;left:0px;top:736.5px;width:970px;height:27.75px;background:#ffffff;"></div><div style="position:absolute;left:0px;top:764.25px;width:970px;height:27.75px;background:#ffffff;"></div><div style="position:absolute;left:0px;top:792.0px;width:970px;height:27.75px;background:#ffffff;"></div><div style="position:absolute;left:0px;top:819.75px;width:970px;height:27.75px;background:#ffffff;"></div><div style="position:absolute;left:0px;top:847.5px;width:970px;height:27.75px;background:#ffffff;"></div><div style="position:absolute;left:0px;top:875.25px;width:970px;height:27.75px;background:#ffffff;"></div><div style="position:absolute;left:7px;top:681.0px;width:1px;height:27.75px;background:#d0d0d0;"></div><div style="position:absolute;left:115px;top:681.0px;width:1px;height:27.75px;background:#d0d0d0;"></div><div style="position:absolute;left:223px;top:681.0px;width:1px;height:27.75px;background:#d0d0d0;"></div><div style="position:absolute;left:331px;top:681.0px;width:1px;height:27.75px;background:#d0d0d0;"></div><div style="position:absolute;left:440px;top:681.0px;width:1px;height:27.75px;background:#d0d0d0;"></div><div style="position:absolute;left:548px;top:681.0px;width:1px;height:27.75px;background:#d0d0d0;"></div><div style="position:absolute;left:656px;top:681.0px;width:1px;height:27.75px;background:#d0d0d0;"></div><div style="position:absolute;left:764px;top:681.0px;width:1px;height:27.75px;background:#d0d0d0;"></div><div style="position:absolute;left:872px;top:681.0px;width:1px;height:27.75px;background:#d0d0d0;"></div><div style="position:absolute;left:980px;top:681.0px;width:1px;height:27.75px;background:#d0d0d0;"></div><div style="position:absolute;left:7px;top:708.75px;width:1px;height:27.75px;background:#d0d0d0;"></div><div style="position:absolute;left:115px;top:708.75px;width:1px;height:27.75px;background:#d0d0d0;"></div><div style="position:absolute;left:223px;top:708.75px;width:1px;height:27.75px;background:#d0d0d0;"></div><div style="position:absolute;left:331px;top:708.75px;width:1px;height:27.75px;background:#d0d0d0;"></div><div style="position:absolute;left:440px;top:708.75px;width:1px;height:27.75px;background:#d0d0d0;"></div><div style="position:absolute;left:548px;top:708.75px;width:1px;height:27.75px;background:#d0d0d0;"></div><div style="position:absolute;left:656px;top:708.75px;width:1px;height:27.75px;background:#d0d0d0;"></div><div style="position:absolute;left:764px;top:708.75px;width:1px;height:27.75px;background:#d0d0d0;"></div><div style="position:absolute;left:872px;top:708.75px;width:1px;height:27.75px;background:#d0d0d0;"></div><div style="position:absolute;left:980px;top:708.75px;width:1px;height:27.75px;background:#d0d0d0;"></div><div style="position:absolute;left:7px;top:736.5px;width:1px;height:27.75px;background:#d0d0d0;"></div><div style="position:absolute;left:115px;top:736.5px;width:1px;height:27.75px;background:#d0d0d0;"></div><div style="position:absolute;left:223px;top:736.5px;width:1px;height:27.75px;background:#d0d0d0;"></div><div style="position:absolute;left:331px;top:736.5px;width:1px;height:27.75px;background:#d0d0d0;"></div><div style="position:absolute;left:440px;top:736.5px;width:1px;height:27.75px;background:#d0d0d0;"></div><div style="position:absolute;left:548px;top:736.5px;width:1px;height:27.75px;background:#d0d0d0;"></div><div style="position:absolute;left:656px;top:736.5px;width:1px;height:27.75px;background:#d0d0d0;"></div><div style="position:absolute;left:764px;top:736.5px;width:1px;height:27.75px;background:#d0d0d0;"></div><div style="position:absolute;left:872px;top:736.5px;width:1px;height:27.75px;background:#d0d0d0;"></div><div style="position:absolute;left:980px;top:736.5px;width:1px;height:27.75px;background:#d0d0d0;"></div><div style="position:absolute;left:7px;top:764.25px;width:1px;height:27.75px;background:#d0d0d0;"></div><div style="position:absolute;left:115px;top:764.25px;width:1px;height:27.75px;background:#d0d0d0;"></div><div style="position:absolute;left:223px;top:764.25px;width:1px;height:27.75px;background:#d0d0d0;"></div><div style="position:absolute;left:331px;top:764.25px;width:1px;height:27.75px;background:#d0d0d0;"></div><div style="position:absolute;left:440px;top:764.25px;width:1px;height:27.75px;background:#d0d0d0;"></div><div style="position:absolute;left:548px;top:764.25px;width:1px;height:27.75px;background:#d0d0d0;"></div><div style="position:absolute;left:656px;top:764.25px;width:1px;height:27.75px;background:#d0d0d0;"></div><div style="position:absolute;left:764px;top:764.25px;width:1px;height:27.75px;background:#d0d0d0;"></div><div style="position:absolute;left:872px;top:764.25px;width:1px;height:27.75px;background:#d0d0d0;"></div><div style="position:absolute;left:980px;top:764.25px;width:1px;height:27.75px;background:#d0d0d0;"></div><div style="position:absolute;left:7px;top:792.0px;width:1px;height:27.75px;background:#d0d0d0;"></div><div style="position:absolute;left:115px;top:792.0px;width:1px;height:27.75px;background:#d0d0d0;"></div><div style="position:absolute;left:223px;top:792.0px;width:1px;height:27.75px;background:#d0d0d0;"></div><div style="position:absolute;left:331px;top:792.0px;width:1px;height:27.75px;background:#d0d0d0;"></div><div style="position:absolute;left:440px;top:792.0px;width:1px;height:27.75px;background:#d0d0d0;"></div><div style="position:absolute;left:548px;top:792.0px;width:1px;height:27.75px;background:#d0d0d0;"></div><div style="position:absolute;left:656px;top:792.0px;width:1px;height:27.75px;background:#d0d0d0;"></div><div style="position:absolute;left:764px;top:792.0px;width:1px;height:27.75px;background:#d0d0d0;"></div><div style="position:absolute;left:872px;top:792.0px;width:1px;height:27.75px;background:#d0d0d0;"></div><div style="position:absolute;left:980px;top:792.0px;width:1px;height:27.75px;background:#d0d0d0;"></div><div style="position:absolute;left:7px;top:819.75px;width:1px;height:27.75px;background:#d0d0d0;"></div><div style="position:absolute;left:115px;top:819.75px;width:1px;height:27.75px;background:#d0d0d0;"></div><div style="position:absolute;left:223px;top:819.75px;width:1px;height:27.75px;background:#d0d0d0;"></div><div style="position:absolute;left:331px;top:819.75px;width:1px;height:27.75px;background:#d0d0d0;"></div><div style="position:absolute;left:440px;top:819.75px;width:1px;height:27.75px;background:#d0d0d0;"></div><div style="position:absolute;left:548px;top:819.75px;width:1px;height:27.75px;background:#d0d0d0;"></div><div style="position:absolute;left:656px;top:819.75px;width:1px;height:27.75px;background:#d0d0d0;"></div><div style="position:absolute;left:764px;top:819.75px;width:1px;height:27.75px;background:#d0d0d0;"></div><div style="position:absolute;left:872px;top:819.75px;width:1px;height:27.75px;background:#d0d0d0;"></div><div style="position:absolute;left:980px;top:819.75px;width:1px;height:27.75px;background:#d0d0d0;"></div><div style="position:absolute;left:7px;top:847.5px;width:1px;height:27.75px;background:#d0d0d0;"></div><div style="position:absolute;left:115px;top:847.5px;width:1px;height:27.75px;background:#d0d0d0;"></div><div style="position:absolute;left:223px;top:847.5px;width:1px;height:27.75px;background:#d0d0d0;"></div><div style="position:absolute;left:331px;top:847.5px;width:1px;height:27.75px;background:#d0d0d0;"></div><div style="position:absolute;left:440px;top:847.5px;width:1px;height:27.75px;background:#d0d0d0;"></div><div style="position:absolute;left:548px;top:847.5px;width:1px;height:27.75px;background:#d0d0d0;"></div><div style="position:absolute;left:656px;top:847.5px;width:1px;height:27.75px;background:#d0d0d0;"></div><div style="position:absolute;left:764px;top:847.5px;width:1px;height:27.75px;background:#d0d0d0;"></div><div style="position:absolute;left:872px;top:847.5px;width:1px;height:27.75px;background:#d0d0d0;"></div><div style="position:absolute;left:980px;top:847.5px;width:1px;height:27.75px;background:#d0d0d0;"></div><div style="position:absolute;left:7px;top:875.25px;width:1px;height:27.75px;background:#d0d0d0;"></div><div style="position:absolute;left:115px;top:875.25px;width:1px;height:27.75px;background:#d0d0d0;"></div><div style="position:absolute;left:223px;top:875.25px;width:1px;height:27.75px;background:#d0d0d0;"></div><div style="position:absolute;left:331px;top:875.25px;width:1px;height:27.75px;background:#d0d0d0;"></div><div style="position:absolute;left:440px;top:875.25px;width:1px;height:27.75px;background:#d0d0d0;"></div><div style="position:absolute;left:548px;top:875.25px;width:1px;height:27.75px;background:#d0d0d0;"></div><div style="position:absolute;left:656px;top:875.25px;width:1px;height:27.75px;background:#d0d0d0;"></div><div style="position:absolute;left:764px;top:875.25px;width:1px;height:27.75px;background:#d0d0d0;"></div><div style="position:absolute;left:872px;top:875.25px;width:1px;height:27.75px;background:#d0d0d0;"></div><div style="position:absolute;left:980px;top:875.25px;width:1px;height:27.75px;background:#d0d0d0;"></div><div style="position:absolute;left:0px;top:708px;width:970px;height:1px;background:#d4d4d4;"></div><div style="position:absolute;left:0px;top:736px;width:970px;height:1px;background:#d4d4d4;"></div><div style="position:absolute;left:0px;top:764px;width:970px;height:1px;background:#d4d4d4;"></div><div style="position:absolute;left:0px;top:792px;width:970px;height:1px;background:#d4d4d4;"></div><div style="position:absolute;left:0px;top:819px;width:970px;height:1px;background:#d4d4d4;"></div><div style="position:absolute;left:0px;top:847px;width:970px;height:1px;background:#d4d4d4;"></div><div style="position:absolute;left:0px;top:875px;width:970px;height:1px;background:#d4d4d4;"></div><div style="position:absolute;left:0px;top:677.5px;width:970px;height:2.7px;background:#ecf5e6;"></div><div style="position:absolute;left:0px;top:680.2px;width:970px;height:1.6px;background:#98ab88;"></div><div style="position:absolute;left:0px;top:902.4px;width:970px;height:1.6px;background:#acacac;"></div><div style="position:absolute;left:-398.6px;width:400px;text-align:right;top:688.88px;font-size:14.6px;line-height:14.6px;color:#2a2a2a;font-weight:normal;font-style:italic;white-space:nowrap;letter-spacing:0.15px;-webkit-text-stroke:0.2px #2a2a2a;">$2.000,0</div><div style="position:absolute;left:-290.48px;width:400px;text-align:right;top:688.88px;font-size:14.6px;line-height:14.6px;color:#2a2a2a;font-weight:normal;font-style:italic;white-space:nowrap;letter-spacing:0.15px;-webkit-text-stroke:0.2px #2a2a2a;">$2.000,0</div><div style="position:absolute;left:-182.36px;width:400px;text-align:right;top:688.88px;font-size:14.6px;line-height:14.6px;color:#2a2a2a;font-weight:normal;font-style:italic;white-space:nowrap;letter-spacing:0.15px;-webkit-text-stroke:0.2px #2a2a2a;">$2.500,0</div><div style="position:absolute;left:-74.23999999999995px;width:400px;text-align:right;top:688.88px;font-size:14.6px;line-height:14.6px;color:#2a2a2a;font-weight:normal;font-style:italic;white-space:nowrap;letter-spacing:0.15px;-webkit-text-stroke:0.2px #2a2a2a;">$3.000,0</div><div style="position:absolute;left:33.88000000000005px;width:400px;text-align:right;top:688.88px;font-size:14.6px;line-height:14.6px;color:#2a2a2a;font-weight:normal;font-style:italic;white-space:nowrap;letter-spacing:0.15px;-webkit-text-stroke:0.2px #2a2a2a;">$2.750,0</div><div style="position:absolute;left:142.0000000000001px;width:400px;text-align:right;top:688.88px;font-size:14.6px;line-height:14.6px;color:#2a2a2a;font-weight:normal;font-style:italic;white-space:nowrap;letter-spacing:0.15px;-webkit-text-stroke:0.2px #2a2a2a;">$3.500,0</div><div style="position:absolute;left:250.12000000000012px;width:400px;text-align:right;top:688.88px;font-size:14.6px;line-height:14.6px;color:#2a2a2a;font-weight:normal;font-style:italic;white-space:nowrap;letter-spacing:0.15px;-webkit-text-stroke:0.2px #2a2a2a;">$3.500,0</div><div style="position:absolute;left:358.2400000000001px;width:400px;text-align:right;top:688.88px;font-size:14.6px;line-height:14.6px;color:#2a2a2a;font-weight:normal;font-style:italic;white-space:nowrap;letter-spacing:0.15px;-webkit-text-stroke:0.2px #2a2a2a;">$4.000,0</div><div style="position:absolute;left:466.3600000000001px;width:400px;text-align:right;top:688.88px;font-size:14.6px;line-height:14.6px;color:#2a2a2a;font-weight:normal;font-style:italic;white-space:nowrap;letter-spacing:0.15px;-webkit-text-stroke:0.2px #2a2a2a;">$2.500,0</div><div style="position:absolute;left:574.4800000000001px;width:400px;text-align:right;top:688.88px;font-size:14.6px;line-height:14.6px;color:#2a2a2a;font-weight:normal;font-style:italic;white-space:nowrap;letter-spacing:0.15px;-webkit-text-stroke:0.2px #2a2a2a;">$2.750,0</div><div style="position:absolute;left:-398.6px;width:400px;text-align:right;top:716.63px;font-size:14.6px;line-height:14.6px;color:#2a2a2a;font-weight:normal;font-style:italic;white-space:nowrap;letter-spacing:0.15px;-webkit-text-stroke:0.2px #2a2a2a;">$950,0</div><div style="position:absolute;left:-290.48px;width:400px;text-align:right;top:716.63px;font-size:14.6px;line-height:14.6px;color:#2a2a2a;font-weight:normal;font-style:italic;white-space:nowrap;letter-spacing:0.15px;-webkit-text-stroke:0.2px #2a2a2a;">$950,0</div><div style="position:absolute;left:-182.36px;width:400px;text-align:right;top:716.63px;font-size:14.6px;line-height:14.6px;color:#2a2a2a;font-weight:normal;font-style:italic;white-space:nowrap;letter-spacing:0.15px;-webkit-text-stroke:0.2px #2a2a2a;">$800,0</div><div style="position:absolute;left:-74.23999999999995px;width:400px;text-align:right;top:716.63px;font-size:14.6px;line-height:14.6px;color:#2a2a2a;font-weight:normal;font-style:italic;white-space:nowrap;letter-spacing:0.15px;-webkit-text-stroke:0.2px #2a2a2a;">$750,0</div><div style="position:absolute;left:33.88000000000005px;width:400px;text-align:right;top:716.63px;font-size:14.6px;line-height:14.6px;color:#2a2a2a;font-weight:normal;font-style:italic;white-space:nowrap;letter-spacing:0.15px;-webkit-text-stroke:0.2px #2a2a2a;">$700,0</div><div style="position:absolute;left:142.0000000000001px;width:400px;text-align:right;top:716.63px;font-size:14.6px;line-height:14.6px;color:#2a2a2a;font-weight:normal;font-style:italic;white-space:nowrap;letter-spacing:0.15px;-webkit-text-stroke:0.2px #2a2a2a;">$750,0</div><div style="position:absolute;left:250.12000000000012px;width:400px;text-align:right;top:716.63px;font-size:14.6px;line-height:14.6px;color:#2a2a2a;font-weight:normal;font-style:italic;white-space:nowrap;letter-spacing:0.15px;-webkit-text-stroke:0.2px #2a2a2a;">$750,0</div><div style="position:absolute;left:358.2400000000001px;width:400px;text-align:right;top:716.63px;font-size:14.6px;line-height:14.6px;color:#2a2a2a;font-weight:normal;font-style:italic;white-space:nowrap;letter-spacing:0.15px;-webkit-text-stroke:0.2px #2a2a2a;">$700,0</div><div style="position:absolute;left:466.3600000000001px;width:400px;text-align:right;top:716.63px;font-size:14.6px;line-height:14.6px;color:#2a2a2a;font-weight:normal;font-style:italic;white-space:nowrap;letter-spacing:0.15px;-webkit-text-stroke:0.2px #2a2a2a;">$800,0</div><div style="position:absolute;left:574.4800000000001px;width:400px;text-align:right;top:716.63px;font-size:14.6px;line-height:14.6px;color:#2a2a2a;font-weight:normal;font-style:italic;white-space:nowrap;letter-spacing:0.15px;-webkit-text-stroke:0.2px #2a2a2a;">$900,0</div><div style="position:absolute;left:-398.6px;width:400px;text-align:right;top:744.38px;font-size:14.6px;line-height:14.6px;color:#2a2a2a;font-weight:normal;font-style:italic;white-space:nowrap;letter-spacing:0.15px;-webkit-text-stroke:0.2px #2a2a2a;">$500,0</div><div style="position:absolute;left:-290.48px;width:400px;text-align:right;top:744.38px;font-size:14.6px;line-height:14.6px;color:#2a2a2a;font-weight:normal;font-style:italic;white-space:nowrap;letter-spacing:0.15px;-webkit-text-stroke:0.2px #2a2a2a;">$500,0</div><div style="position:absolute;left:-182.36px;width:400px;text-align:right;top:744.38px;font-size:14.6px;line-height:14.6px;color:#2a2a2a;font-weight:normal;font-style:italic;white-space:nowrap;letter-spacing:0.15px;-webkit-text-stroke:0.2px #2a2a2a;">$400,0</div><div style="position:absolute;left:-74.23999999999995px;width:400px;text-align:right;top:744.38px;font-size:14.6px;line-height:14.6px;color:#2a2a2a;font-weight:normal;font-style:italic;white-space:nowrap;letter-spacing:0.15px;-webkit-text-stroke:0.2px #2a2a2a;">$450,0</div><div style="position:absolute;left:33.88000000000005px;width:400px;text-align:right;top:744.38px;font-size:14.6px;line-height:14.6px;color:#2a2a2a;font-weight:normal;font-style:italic;white-space:nowrap;letter-spacing:0.15px;-webkit-text-stroke:0.2px #2a2a2a;">$400,0</div><div style="position:absolute;left:142.0000000000001px;width:400px;text-align:right;top:744.38px;font-size:14.6px;line-height:14.6px;color:#2a2a2a;font-weight:normal;font-style:italic;white-space:nowrap;letter-spacing:0.15px;-webkit-text-stroke:0.2px #2a2a2a;">$450,0</div><div style="position:absolute;left:250.12000000000012px;width:400px;text-align:right;top:744.38px;font-size:14.6px;line-height:14.6px;color:#2a2a2a;font-weight:normal;font-style:italic;white-space:nowrap;letter-spacing:0.15px;-webkit-text-stroke:0.2px #2a2a2a;">$700,0</div><div style="position:absolute;left:358.2400000000001px;width:400px;text-align:right;top:744.38px;font-size:14.6px;line-height:14.6px;color:#2a2a2a;font-weight:normal;font-style:italic;white-space:nowrap;letter-spacing:0.15px;-webkit-text-stroke:0.2px #2a2a2a;">$500,0</div><div style="position:absolute;left:466.3600000000001px;width:400px;text-align:right;top:744.38px;font-size:14.6px;line-height:14.6px;color:#2a2a2a;font-weight:normal;font-style:italic;white-space:nowrap;letter-spacing:0.15px;-webkit-text-stroke:0.2px #2a2a2a;">$500,0</div><div style="position:absolute;left:574.4800000000001px;width:400px;text-align:right;top:744.38px;font-size:14.6px;line-height:14.6px;color:#2a2a2a;font-weight:normal;font-style:italic;white-space:nowrap;letter-spacing:0.15px;-webkit-text-stroke:0.2px #2a2a2a;">$400,0</div><div style="position:absolute;left:-398.6px;width:400px;text-align:right;top:772.13px;font-size:14.6px;line-height:14.6px;color:#2a2a2a;font-weight:normal;font-style:italic;white-space:nowrap;letter-spacing:0.15px;-webkit-text-stroke:0.2px #2a2a2a;">$200,0</div><div style="position:absolute;left:-290.48px;width:400px;text-align:right;top:772.13px;font-size:14.6px;line-height:14.6px;color:#2a2a2a;font-weight:normal;font-style:italic;white-space:nowrap;letter-spacing:0.15px;-webkit-text-stroke:0.2px #2a2a2a;">$200,0</div><div style="position:absolute;left:-182.36px;width:400px;text-align:right;top:772.13px;font-size:14.6px;line-height:14.6px;color:#2a2a2a;font-weight:normal;font-style:italic;white-space:nowrap;letter-spacing:0.15px;-webkit-text-stroke:0.2px #2a2a2a;">$300,0</div><div style="position:absolute;left:-74.23999999999995px;width:400px;text-align:right;top:772.13px;font-size:14.6px;line-height:14.6px;color:#2a2a2a;font-weight:normal;font-style:italic;white-space:nowrap;letter-spacing:0.15px;-webkit-text-stroke:0.2px #2a2a2a;">$350,0</div><div style="position:absolute;left:33.88000000000005px;width:400px;text-align:right;top:772.13px;font-size:14.6px;line-height:14.6px;color:#2a2a2a;font-weight:normal;font-style:italic;white-space:nowrap;letter-spacing:0.15px;-webkit-text-stroke:0.2px #2a2a2a;">$250,0</div><div style="position:absolute;left:142.0000000000001px;width:400px;text-align:right;top:772.13px;font-size:14.6px;line-height:14.6px;color:#2a2a2a;font-weight:normal;font-style:italic;white-space:nowrap;letter-spacing:0.15px;-webkit-text-stroke:0.2px #2a2a2a;">$250,0</div><div style="position:absolute;left:250.12000000000012px;width:400px;text-align:right;top:772.13px;font-size:14.6px;line-height:14.6px;color:#2a2a2a;font-weight:normal;font-style:italic;white-space:nowrap;letter-spacing:0.15px;-webkit-text-stroke:0.2px #2a2a2a;">$200,0</div><div style="position:absolute;left:358.2400000000001px;width:400px;text-align:right;top:772.13px;font-size:14.6px;line-height:14.6px;color:#2a2a2a;font-weight:normal;font-style:italic;white-space:nowrap;letter-spacing:0.15px;-webkit-text-stroke:0.2px #2a2a2a;">$300,0</div><div style="position:absolute;left:466.3600000000001px;width:400px;text-align:right;top:772.13px;font-size:14.6px;line-height:14.6px;color:#2a2a2a;font-weight:normal;font-style:italic;white-space:nowrap;letter-spacing:0.15px;-webkit-text-stroke:0.2px #2a2a2a;">$350,0</div><div style="position:absolute;left:574.4800000000001px;width:400px;text-align:right;top:772.13px;font-size:14.6px;line-height:14.6px;color:#2a2a2a;font-weight:normal;font-style:italic;white-space:nowrap;letter-spacing:0.15px;-webkit-text-stroke:0.2px #2a2a2a;">$300,0</div><div style="position:absolute;left:-398.6px;width:400px;text-align:right;top:799.88px;font-size:14.6px;line-height:14.6px;color:#2a2a2a;font-weight:normal;font-style:italic;white-space:nowrap;letter-spacing:0.15px;-webkit-text-stroke:0.2px #2a2a2a;">$250,0</div><div style="position:absolute;left:-290.48px;width:400px;text-align:right;top:799.88px;font-size:14.6px;line-height:14.6px;color:#2a2a2a;font-weight:normal;font-style:italic;white-space:nowrap;letter-spacing:0.15px;-webkit-text-stroke:0.2px #2a2a2a;">$250,0</div><div style="position:absolute;left:-182.36px;width:400px;text-align:right;top:799.88px;font-size:14.6px;line-height:14.6px;color:#2a2a2a;font-weight:normal;font-style:italic;white-space:nowrap;letter-spacing:0.15px;-webkit-text-stroke:0.2px #2a2a2a;">$300,0</div><div style="position:absolute;left:-74.23999999999995px;width:400px;text-align:right;top:799.88px;font-size:14.6px;line-height:14.6px;color:#2a2a2a;font-weight:normal;font-style:italic;white-space:nowrap;letter-spacing:0.15px;-webkit-text-stroke:0.2px #2a2a2a;">$300,0</div><div style="position:absolute;left:33.88000000000005px;width:400px;text-align:right;top:799.88px;font-size:14.6px;line-height:14.6px;color:#2a2a2a;font-weight:normal;font-style:italic;white-space:nowrap;letter-spacing:0.15px;-webkit-text-stroke:0.2px #2a2a2a;">$250,0</div><div style="position:absolute;left:142.0000000000001px;width:400px;text-align:right;top:799.88px;font-size:14.6px;line-height:14.6px;color:#2a2a2a;font-weight:normal;font-style:italic;white-space:nowrap;letter-spacing:0.15px;-webkit-text-stroke:0.2px #2a2a2a;">$250,0</div><div style="position:absolute;left:250.12000000000012px;width:400px;text-align:right;top:799.88px;font-size:14.6px;line-height:14.6px;color:#2a2a2a;font-weight:normal;font-style:italic;white-space:nowrap;letter-spacing:0.15px;-webkit-text-stroke:0.2px #2a2a2a;">$300,0</div><div style="position:absolute;left:358.2400000000001px;width:400px;text-align:right;top:799.88px;font-size:14.6px;line-height:14.6px;color:#2a2a2a;font-weight:normal;font-style:italic;white-space:nowrap;letter-spacing:0.15px;-webkit-text-stroke:0.2px #2a2a2a;">$300,0</div><div style="position:absolute;left:466.3600000000001px;width:400px;text-align:right;top:799.88px;font-size:14.6px;line-height:14.6px;color:#2a2a2a;font-weight:normal;font-style:italic;white-space:nowrap;letter-spacing:0.15px;-webkit-text-stroke:0.2px #2a2a2a;">$350,0</div><div style="position:absolute;left:574.4800000000001px;width:400px;text-align:right;top:799.88px;font-size:14.6px;line-height:14.6px;color:#2a2a2a;font-weight:normal;font-style:italic;white-space:nowrap;letter-spacing:0.15px;-webkit-text-stroke:0.2px #2a2a2a;">$400,0</div><div style="position:absolute;left:-398.6px;width:400px;text-align:right;top:827.63px;font-size:14.6px;line-height:14.6px;color:#2a2a2a;font-weight:normal;font-style:italic;white-space:nowrap;letter-spacing:0.15px;-webkit-text-stroke:0.2px #2a2a2a;">$450,0</div><div style="position:absolute;left:-290.48px;width:400px;text-align:right;top:827.63px;font-size:14.6px;line-height:14.6px;color:#2a2a2a;font-weight:normal;font-style:italic;white-space:nowrap;letter-spacing:0.15px;-webkit-text-stroke:0.2px #2a2a2a;">$450,0</div><div style="position:absolute;left:-182.36px;width:400px;text-align:right;top:827.63px;font-size:14.6px;line-height:14.6px;color:#2a2a2a;font-weight:normal;font-style:italic;white-space:nowrap;letter-spacing:0.15px;-webkit-text-stroke:0.2px #2a2a2a;">$650,0</div><div style="position:absolute;left:-74.23999999999995px;width:400px;text-align:right;top:827.63px;font-size:14.6px;line-height:14.6px;color:#2a2a2a;font-weight:normal;font-style:italic;white-space:nowrap;letter-spacing:0.15px;-webkit-text-stroke:0.2px #2a2a2a;">$600,0</div><div style="position:absolute;left:33.88000000000005px;width:400px;text-align:right;top:827.63px;font-size:14.6px;line-height:14.6px;color:#2a2a2a;font-weight:normal;font-style:italic;white-space:nowrap;letter-spacing:0.15px;-webkit-text-stroke:0.2px #2a2a2a;">$550,0</div><div style="position:absolute;left:142.0000000000001px;width:400px;text-align:right;top:827.63px;font-size:14.6px;line-height:14.6px;color:#2a2a2a;font-weight:normal;font-style:italic;white-space:nowrap;letter-spacing:0.15px;-webkit-text-stroke:0.2px #2a2a2a;">$500,0</div><div style="position:absolute;left:250.12000000000012px;width:400px;text-align:right;top:827.63px;font-size:14.6px;line-height:14.6px;color:#2a2a2a;font-weight:normal;font-style:italic;white-space:nowrap;letter-spacing:0.15px;-webkit-text-stroke:0.2px #2a2a2a;">$450,0</div><div style="position:absolute;left:358.2400000000001px;width:400px;text-align:right;top:827.63px;font-size:14.6px;line-height:14.6px;color:#2a2a2a;font-weight:normal;font-style:italic;white-space:nowrap;letter-spacing:0.15px;-webkit-text-stroke:0.2px #2a2a2a;">$400,0</div><div style="position:absolute;left:466.3600000000001px;width:400px;text-align:right;top:827.63px;font-size:14.6px;line-height:14.6px;color:#2a2a2a;font-weight:normal;font-style:italic;white-space:nowrap;letter-spacing:0.15px;-webkit-text-stroke:0.2px #2a2a2a;">$350,0</div><div style="position:absolute;left:574.4800000000001px;width:400px;text-align:right;top:827.63px;font-size:14.6px;line-height:14.6px;color:#2a2a2a;font-weight:normal;font-style:italic;white-space:nowrap;letter-spacing:0.15px;-webkit-text-stroke:0.2px #2a2a2a;">$350,0</div><div style="position:absolute;left:-398.6px;width:400px;text-align:right;top:855.38px;font-size:14.6px;line-height:14.6px;color:#2a2a2a;font-weight:normal;font-style:italic;white-space:nowrap;letter-spacing:0.15px;-webkit-text-stroke:0.2px #2a2a2a;">$100,0</div><div style="position:absolute;left:-290.48px;width:400px;text-align:right;top:855.38px;font-size:14.6px;line-height:14.6px;color:#2a2a2a;font-weight:normal;font-style:italic;white-space:nowrap;letter-spacing:0.15px;-webkit-text-stroke:0.2px #2a2a2a;">$100,0</div><div style="position:absolute;left:-182.36px;width:400px;text-align:right;top:855.38px;font-size:14.6px;line-height:14.6px;color:#2a2a2a;font-weight:normal;font-style:italic;white-space:nowrap;letter-spacing:0.15px;-webkit-text-stroke:0.2px #2a2a2a;">$150,0</div><div style="position:absolute;left:-74.23999999999995px;width:400px;text-align:right;top:855.38px;font-size:14.6px;line-height:14.6px;color:#2a2a2a;font-weight:normal;font-style:italic;white-space:nowrap;letter-spacing:0.15px;-webkit-text-stroke:0.2px #2a2a2a;">$150,0</div><div style="position:absolute;left:33.88000000000005px;width:400px;text-align:right;top:855.38px;font-size:14.6px;line-height:14.6px;color:#2a2a2a;font-weight:normal;font-style:italic;white-space:nowrap;letter-spacing:0.15px;-webkit-text-stroke:0.2px #2a2a2a;">$150,0</div><div style="position:absolute;left:142.0000000000001px;width:400px;text-align:right;top:855.38px;font-size:14.6px;line-height:14.6px;color:#2a2a2a;font-weight:normal;font-style:italic;white-space:nowrap;letter-spacing:0.15px;-webkit-text-stroke:0.2px #2a2a2a;">$150,0</div><div style="position:absolute;left:250.12000000000012px;width:400px;text-align:right;top:855.38px;font-size:14.6px;line-height:14.6px;color:#2a2a2a;font-weight:normal;font-style:italic;white-space:nowrap;letter-spacing:0.15px;-webkit-text-stroke:0.2px #2a2a2a;">$200,0</div><div style="position:absolute;left:358.2400000000001px;width:400px;text-align:right;top:855.38px;font-size:14.6px;line-height:14.6px;color:#2a2a2a;font-weight:normal;font-style:italic;white-space:nowrap;letter-spacing:0.15px;-webkit-text-stroke:0.2px #2a2a2a;">$200,0</div><div style="position:absolute;left:466.3600000000001px;width:400px;text-align:right;top:855.38px;font-size:14.6px;line-height:14.6px;color:#2a2a2a;font-weight:normal;font-style:italic;white-space:nowrap;letter-spacing:0.15px;-webkit-text-stroke:0.2px #2a2a2a;">$200,0</div><div style="position:absolute;left:574.4800000000001px;width:400px;text-align:right;top:855.38px;font-size:14.6px;line-height:14.6px;color:#2a2a2a;font-weight:normal;font-style:italic;white-space:nowrap;letter-spacing:0.15px;-webkit-text-stroke:0.2px #2a2a2a;">$250,0</div><div style="position:absolute;left:-398.6px;width:400px;text-align:right;top:883.13px;font-size:14.6px;line-height:14.6px;color:#2a2a2a;font-weight:normal;font-style:italic;white-space:nowrap;letter-spacing:0.15px;-webkit-text-stroke:0.2px #2a2a2a;">$200,0</div><div style="position:absolute;left:-290.48px;width:400px;text-align:right;top:883.13px;font-size:14.6px;line-height:14.6px;color:#2a2a2a;font-weight:normal;font-style:italic;white-space:nowrap;letter-spacing:0.15px;-webkit-text-stroke:0.2px #2a2a2a;">$200,0</div><div style="position:absolute;left:-182.36px;width:400px;text-align:right;top:883.13px;font-size:14.6px;line-height:14.6px;color:#2a2a2a;font-weight:normal;font-style:italic;white-space:nowrap;letter-spacing:0.15px;-webkit-text-stroke:0.2px #2a2a2a;">$200,0</div><div style="position:absolute;left:-74.23999999999995px;width:400px;text-align:right;top:883.13px;font-size:14.6px;line-height:14.6px;color:#2a2a2a;font-weight:normal;font-style:italic;white-space:nowrap;letter-spacing:0.15px;-webkit-text-stroke:0.2px #2a2a2a;">$200,0</div><div style="position:absolute;left:33.88000000000005px;width:400px;text-align:right;top:883.13px;font-size:14.6px;line-height:14.6px;color:#2a2a2a;font-weight:normal;font-style:italic;white-space:nowrap;letter-spacing:0.15px;-webkit-text-stroke:0.2px #2a2a2a;">$200,0</div><div style="position:absolute;left:142.0000000000001px;width:400px;text-align:right;top:883.13px;font-size:14.6px;line-height:14.6px;color:#2a2a2a;font-weight:normal;font-style:italic;white-space:nowrap;letter-spacing:0.15px;-webkit-text-stroke:0.2px #2a2a2a;">$200,0</div><div style="position:absolute;left:250.12000000000012px;width:400px;text-align:right;top:883.13px;font-size:14.6px;line-height:14.6px;color:#2a2a2a;font-weight:normal;font-style:italic;white-space:nowrap;letter-spacing:0.15px;-webkit-text-stroke:0.2px #2a2a2a;">$200,0</div><div style="position:absolute;left:358.2400000000001px;width:400px;text-align:right;top:883.13px;font-size:14.6px;line-height:14.6px;color:#2a2a2a;font-weight:normal;font-style:italic;white-space:nowrap;letter-spacing:0.15px;-webkit-text-stroke:0.2px #2a2a2a;">$200,0</div><div style="position:absolute;left:466.3600000000001px;width:400px;text-align:right;top:883.13px;font-size:14.6px;line-height:14.6px;color:#2a2a2a;font-weight:normal;font-style:italic;white-space:nowrap;letter-spacing:0.15px;-webkit-text-stroke:0.2px #2a2a2a;">$200,0</div><div style="position:absolute;left:574.4800000000001px;width:400px;text-align:right;top:883.13px;font-size:14.6px;line-height:14.6px;color:#2a2a2a;font-weight:normal;font-style:italic;white-space:nowrap;letter-spacing:0.15px;-webkit-text-stroke:0.2px #2a2a2a;">$250,0</div><div style="position:absolute;left:0px;top:626px;width:970px;height:2.5px;background:#e2ebf3;"></div><div style="position:absolute;left:0px;top:903px;width:970px;height:9px;background:#e4e4e4;"></div><div style="position:absolute;left:0px;top:911.6px;width:970px;height:1.2px;background:#b8b8b8;"></div><div style="position:absolute;left:0px;top:912.8px;width:970px;height:18px;background:#ffffff;"></div><div style="position:absolute;left:0px;top:930.6px;width:970px;height:1px;background:#c8c8c8;"></div><div style="position:absolute;left:0px;top:931.6px;width:970px;height:10px;background:#e4e4e4;"></div><div style="position:absolute;left:0px;top:941.4px;width:970px;height:1.2px;background:#c0c0c0;"></div><div style="position:absolute;left:0px;top:942.6px;width:970px;height:28px;background:#f0f0f0;"></div>
</body></html>
